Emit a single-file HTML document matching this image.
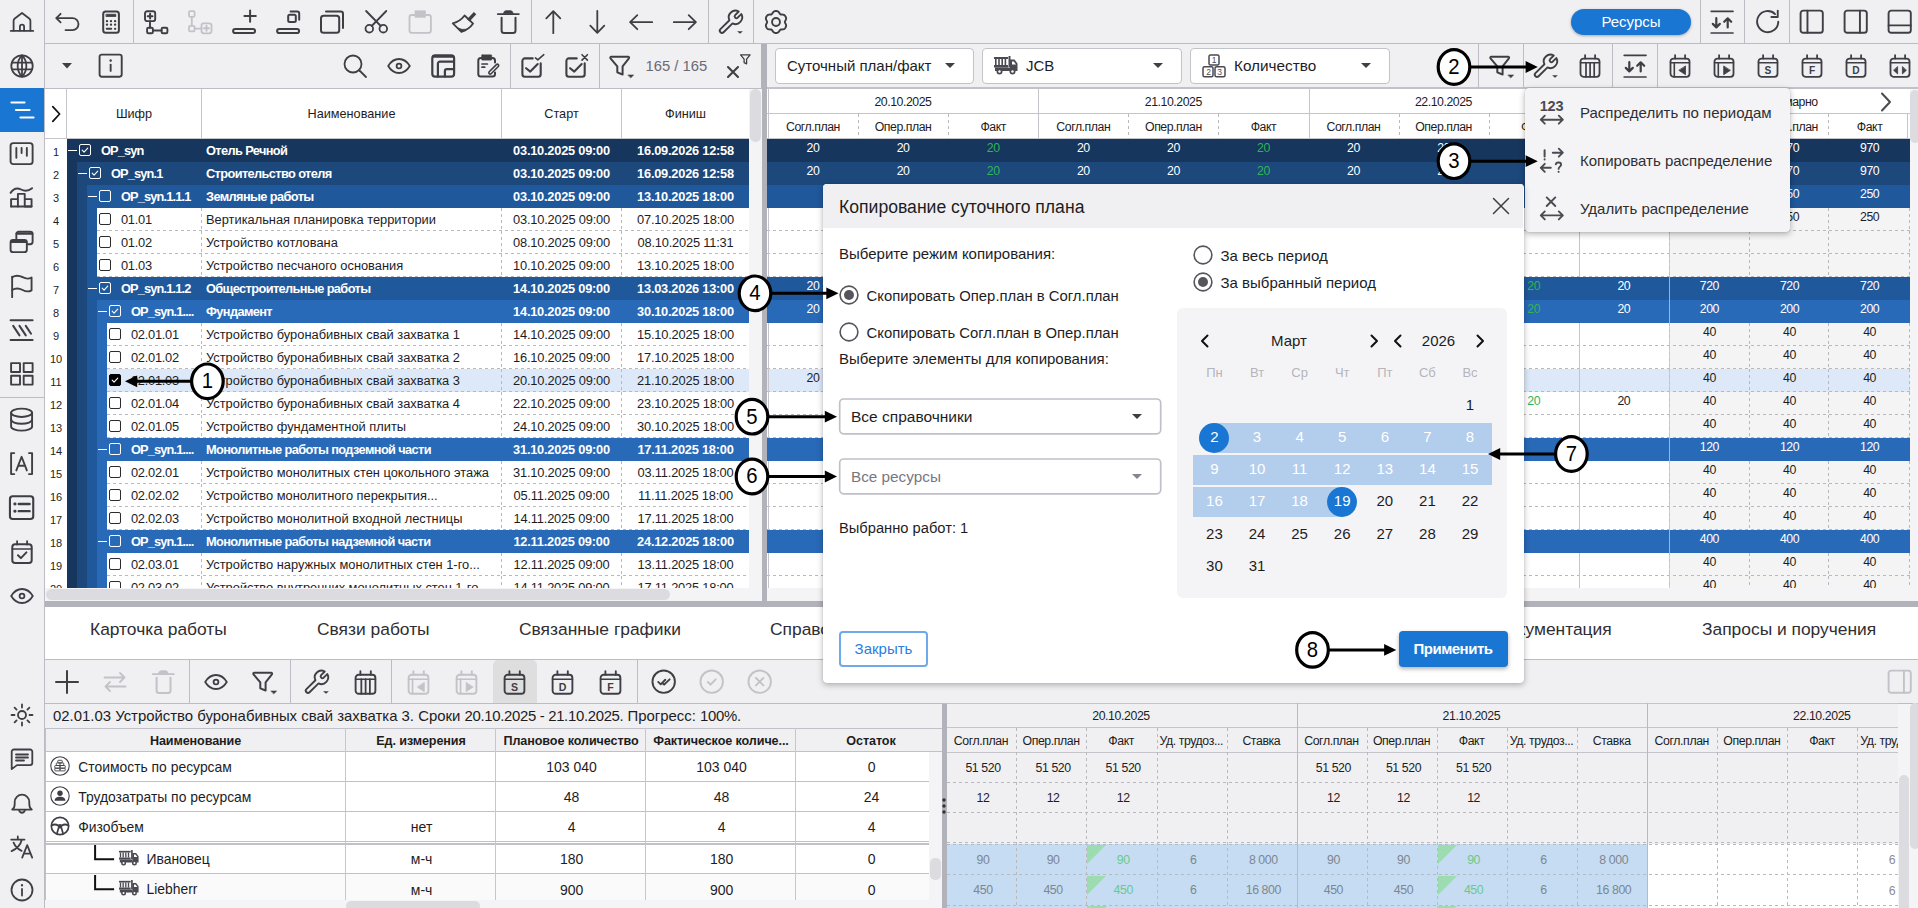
<!DOCTYPE html><html><head><meta charset="utf-8"><title>UI</title><style>
*{box-sizing:border-box;margin:0;padding:0}
html,body{width:1918px;height:908px;overflow:hidden}
body{position:relative;background:#f0f0f2;font-family:"Liberation Sans",sans-serif;color:#1d1d1f;font-size:13px}
.abs,.a{position:absolute}
.ic{position:absolute;fill:none;stroke:#3e3e45;color:#3e3e45;stroke-width:1.8;stroke-linecap:round;stroke-linejoin:round;overflow:visible}
.ic.dis{stroke:#c2c2c8;color:#c2c2c8}
.vs{position:absolute;width:1px;background:#bcbcc4}
.hl{position:absolute;height:1px;background:#bcbcc4}
.nw{white-space:nowrap}
/* left table */
.lt{position:absolute;left:45px;top:89px;width:704px;height:499px;overflow:hidden;background:#fff}
.lr{position:absolute;left:0;width:704px;height:23px;line-height:23px;font-size:12.85px;white-space:nowrap}
.lr .num{position:absolute;left:0;width:22px;text-align:center;font-size:11px;color:#1d1d1f;top:2.3px}
.lr .bg{position:absolute;top:0;height:23px;right:0}
.lr .st{position:absolute;top:0;height:23px;width:10px}
.lr .t{position:absolute;top:0;height:23px;overflow:hidden}
.lr.g .t{color:#fff;font-weight:bold;letter-spacing:-0.62px;font-size:12.8px}
.lr.g .t.k{letter-spacing:-0.85px}
.lr.g .t.d{letter-spacing:-0.22px;font-size:12.8px}
.lr .c{text-align:center}
.lr .t.d{letter-spacing:-0.2px}
.lr:not(.g) .t.k{letter-spacing:-0.28px}
.cb{position:absolute;width:12px;height:12px;border:1.5px solid #2b2b30;border-radius:2px;background:#fff;top:4.8px}
.lr.g .cb{background:transparent;border-color:#fff;border-width:1.3px}
.mn{position:absolute;top:10.5px;width:9px;height:1.6px;background:#fff}
.db{position:absolute;left:0;right:0;bottom:0;height:1px;background-image:linear-gradient(90deg,#b9b9bd 0 3px,transparent 3px 6px);background-size:6px 1px}
.dv{position:absolute;top:0;bottom:0;width:1px;background-image:linear-gradient(180deg,#b9b9bd 0 3px,transparent 3px 6px);background-size:1px 6px}
/* right grid */
.rg{position:absolute;left:767px;top:89px;width:1143px;height:499px;overflow:hidden;background:#fff;font-size:12px;letter-spacing:-0.45px}
.rr{position:absolute;left:0;width:1143px;height:23px;line-height:18px;white-space:nowrap;font-size:12.3px}
.rr .v{position:absolute;top:0;text-align:center;color:#1d1d1f}
.rr.g .v{color:#fff}
.rr .v.gr{color:#2fb457}
/* modal */
.modal{position:absolute;left:822.9px;top:184.2px;width:701px;height:498.7px;background:#fff;border-radius:4px;box-shadow:0 2px 6px rgba(0,0,0,.28),0 0 1px rgba(0,0,0,.25);overflow:hidden}
.modal>.in{position:absolute;left:-0.9px;top:-0.2px;width:701px;height:499px}
.radio{position:absolute;width:20px;height:20px;border-radius:50%;border:2px solid #55555d;background:#fff;box-shadow:0 0 1px rgba(0,0,0,.25)}
.radio.on::after{content:"";position:absolute;left:2.9px;top:2.9px;width:10px;height:10px;border-radius:50%;background:#55555d}

.sel{position:absolute;border:1.5px solid #b4b4bc;box-shadow:0 0 1px rgba(0,0,0,.15);border-radius:4px;background:#fff}
.dd{position:absolute;top:48px;height:36px;border:1px solid #c3c3ca;border-radius:4px;background:#fff}
.tri{position:absolute;width:0;height:0;border-left:5px solid transparent;border-right:5px solid transparent;border-top:5.5px solid #3e3e45}
.cal td{}
/* bottom */
.bt{position:absolute;font-size:14px}
.ann circle,.ann ellipse{fill:#fff;stroke:#000;stroke-width:3.2}
.ann text{font-family:"Liberation Sans",sans-serif;font-size:21.6px;fill:#000;text-anchor:middle}
.ann line{stroke:#000;stroke-width:3}
.ann polygon{fill:#000}
</style></head><body><div class="a" style="left:0;top:0;width:44px;height:908px;background:#f0f0f2"></div><div class="vs" style="left:44px;top:0;height:908px"></div><div class="a" style="left:0;top:88px;width:44px;height:44px;background:#1976d2"></div><svg class="ic " style="left:10.0px;top:10.0px;width:24px;height:24px;" viewBox="0 0 24 24"><path d="M0.8 20.900h22.400"/><path d="M3.600 20.700V10.800c0-1 .4-1.700 1.200-2.300L12 3l7.200 5.500c.8.600 1.200 1.300 1.200 2.300v9.900"/><path d="M9.900 20.700v-3.900a2.100 2.100 0 0 1 4.200 0v3.900"/></svg><svg class="ic " style="left:10.0px;top:54.0px;width:24px;height:24px;" viewBox="0 0 24 24"><circle cx="12" cy="12" r="10.700"/><path d="M2.300 8.700h19.400M2.300 15.300h19.400M12 1.300v21.400"/><path d="M12 1.400c-5.800 5.800-5.800 15.400 0 21.200M12 1.400c5.800 5.800 5.800 15.400 0 21.200"/></svg><svg class="ic " style="left:10.0px;top:98.0px;width:24px;height:24px;stroke:#fff;color:#fff;" viewBox="0 0 24 24"><path d="M1.5 4.5h13M6 12h13.5M10.5 19.5h13" stroke-width="2.2"/></svg><svg class="ic " style="left:9.4px;top:141.4px;width:25.2px;height:25.2px;" viewBox="0 0 24 24"><rect x="1.5" y="2" width="21" height="20" rx="2.5"/><path d="M7 6.5v9.5M12 6.5v5M17 6.5v7.5"/></svg><svg class="ic " style="left:9.4px;top:185.4px;width:25.2px;height:25.2px;" viewBox="0 0 24 24"><path d="M2 20.5V13.5h6.5v7M8.5 20.5V8.5h6.5v12M15 20.5v-7h6.5v7z"/><path d="M2 20.5h19.5"/><path d="M1.5 7.5c3-4.5 6.5-5 10-3.2 3.5 1.8 7 1.5 10.5-1.3"/></svg><svg class="ic " style="left:9.4px;top:229.4px;width:25.2px;height:25.2px;" viewBox="0 0 24 24"><rect x="7" y="2.5" width="15.5" height="12" rx="2.3"/><path d="M7.5 4.2h14.5" stroke-width="2.4"/><rect x="1.5" y="10.5" width="15.5" height="11.5" rx="2.3" fill="#f0f0f2"/><path d="M2 12.2h14.5" stroke-width="2.2"/></svg><svg class="ic " style="left:9.4px;top:273.4px;width:25.2px;height:25.2px;" viewBox="0 0 24 24"><path d="M3 23V3.5"/><path d="M3 4c3.5-2.2 7-1.6 10 0s6 1.7 8.5 .3v12.2c-2.5 1.4-5.5 1.3-8.5-.3s-6.5-2.2-10 0"/></svg><svg class="ic " style="left:9.4px;top:317.4px;width:25.2px;height:25.2px;" viewBox="0 0 24 24"><path d="M1.5 3h21M1.5 22h21" stroke-width="1.9"/><path d="M4 8.5l6 9M10 8.5l6 9M16 8.5l5 7.5" stroke-width="1.9"/></svg><svg class="ic " style="left:9.4px;top:361.4px;width:25.2px;height:25.2px;" viewBox="0 0 24 24"><rect x="2" y="2" width="8.5" height="8.5"/><rect x="14" y="2" width="8.5" height="8.5"/><rect x="2" y="14" width="8.5" height="8.5"/><rect x="14" y="14" width="8.5" height="8.5"/></svg><svg class="ic " style="left:9.4px;top:407.4px;width:25.2px;height:25.2px;" viewBox="0 0 24 24"><ellipse cx="12" cy="5.5" rx="10" ry="4"/><path d="M2 5.5v13c0 2.2 4.5 4 10 4s10-1.8 10-4v-13"/><path d="M2 12c0 2.2 4.5 4 10 4s10-1.8 10-4"/></svg><svg class="ic " style="left:9.4px;top:451.4px;width:25.2px;height:25.2px;" viewBox="0 0 24 24"><path d="M5 2H2v20h3M19 2h3v20h-3"/><path d="M7 18.5L12 5.5l5 13M8.8 14h6.4"/></svg><svg class="ic " style="left:9.4px;top:495.4px;width:25.2px;height:25.2px;" viewBox="0 0 24 24"><rect x="0.900" y="1.200" width="22.200" height="21.600" rx="2.600" stroke-width="2"/><path d="M9.300 8.600h10.300M9.300 15.400h10.300" stroke-width="2.300"/><path d="M5.500 8.600h.3M5.500 15.400h.3" stroke-width="2.800"/></svg><svg class="ic " style="left:10.0px;top:540.0px;width:24px;height:24px;" viewBox="0 0 24 24"><rect x="2.300" y="4.300" width="19.400" height="18.700" rx="2.800" stroke-width="2"/><path d="M2.500 9h19" stroke-width="1.700"/><path d="M7.100 1.200v3.400M17.100 1.200v3.400"/><path d="M8 15.200l2.900 2.900 5.500-5.700" stroke-width="2"/></svg><svg class="ic " style="left:10.0px;top:584.0px;width:24px;height:24px;" viewBox="0 0 24 24"><path d="M1.2 12C4 7.3 7.7 5 12 5s8 2.3 10.8 7C20 16.7 16.3 19 12 19S4 16.7 1.2 12z"/><circle cx="12" cy="12" r="2.4"/></svg><svg class="ic " style="left:10.0px;top:703.0px;width:24px;height:24px;" viewBox="0 0 24 24"><circle cx="12" cy="12" r="4"/><path d="M12 1.5v3M12 19.5v3M1.5 12h3M19.5 12h3M4.6 4.6l2 2M17.4 17.4l2 2M4.6 19.4l2-2M17.4 6.6l2-2"/></svg><svg class="ic " style="left:10.0px;top:747.0px;width:24px;height:24px;" viewBox="0 0 24 24"><path d="M4 2.5h16a2.3 2.3 0 0 1 2.3 2.3v11a2.3 2.3 0 0 1-2.3 2.3H7l-5.3 4V4.8A2.3 2.3 0 0 1 4 2.5z"/><path d="M6 7.5h12M6 10.5h12M6 13.5h8"/></svg><svg class="ic " style="left:10.0px;top:791.0px;width:24px;height:24px;" viewBox="0 0 24 24"><path d="M2.200 18.600c1.800-1.100 2.500-2.900 2.500-5.600V11a7.300 7.300 0 0 1 14.600 0v2c0 2.700.7 4.500 2.500 5.600z"/><path d="M9.200 19.600a2.900 2.900 0 0 0 5.600 0"/></svg><svg class="ic " style="left:10.0px;top:835.0px;width:24px;height:24px;" viewBox="0 0 24 24"><path d="M1.200 4.600h13.300M7.800 1.500v3M3.600 7.600c1.400 3.400 4.300 6.500 8 8.300M11.800 4.800c-1.200 4.700-4.700 9-10.200 11.300"/><path d="M12.200 22.600l5-12.400 5 12.400M13.900 18.600h6.600" /></svg><svg class="ic " style="left:10.0px;top:878.0px;width:24px;height:24px;" viewBox="0 0 24 24"><circle cx="12" cy="12" r="10.500"/><path d="M12 11v6.500"/><path d="M12 7v.4" stroke-width="2.200"/></svg><div class="hl" style="left:0;top:397px;width:44px"></div><div class="hl" style="left:45px;top:43px;width:1873px"></div><svg class="ic " style="left:55.0px;top:10.0px;width:24px;height:24px;" viewBox="0 0 24 24"><path d="M5.600 3.800L1.300 8.100l4.300 4.300"/><path d="M1.600 8.100h15.900a6 6 0 0 1 0 12h-7"/></svg><svg class="ic " style="left:99.0px;top:10.0px;width:24px;height:24px;" viewBox="0 0 24 24"><rect x="4.200" y="1.500" width="15.700" height="21.200" rx="2.500" stroke-width="2"/><path d="M7.300 4.300h9.500v2.200H7.300z" fill="currentColor" stroke-width=".8"/><path d="M7.900 11.200h.2M11.900 11.200h.2M16 11.200h.2M7.900 14.700h.2M11.900 14.700h.2M16 14.700h.2M16 18.800h.2" stroke-width="2.200"/><path d="M7.800 18.800h4.400" stroke-width="2.100"/></svg><svg class="ic " style="left:144.0px;top:10.0px;width:24px;height:24px;" viewBox="0 0 24 24"><rect x="1" y="1.300" width="10.200" height="9.800" rx="2.200" stroke-width="1.900"/><path d="M3.700 6.200h4.800M6.100 3.800v4.800" stroke-width="2"/><path d="M6 11.200v6.500M8.900 20.500h8.700" stroke-width="1.900"/><rect x="3.100" y="17.800" width="5.800" height="5.400" rx="1.300" stroke-width="1.900"/><rect x="17.600" y="17.800" width="5.800" height="5.400" rx="1.300" stroke-width="1.900"/></svg><svg class="ic dis" style="left:188.0px;top:10.0px;width:24px;height:24px;" viewBox="0 0 24 24"><rect x="1" y="1.200" width="5.600" height="5.600" rx="1.200"/><path d="M3.800 6.800v9M6.600 18.600h6.800"/><rect x="1" y="15.800" width="5.600" height="5.600" rx="1.200"/><rect x="13.500" y="13.300" width="10" height="10" rx="2.200"/><path d="M16 18.300h5M18.500 15.800v5" stroke-width="1.900"/></svg><svg class="ic " style="left:232.0px;top:10.0px;width:24px;height:24px;" viewBox="0 0 24 24"><rect x="1.100" y="18.900" width="22" height="4.200" rx="2.100" stroke-width="2"/><path d="M12.400 6.100h11.400M18.100 .400v11.400" stroke-width="2"/></svg><svg class="ic " style="left:276.0px;top:10.0px;width:24px;height:24px;" viewBox="0 0 24 24"><rect x="1.100" y="18.900" width="22" height="4.200" rx="2.100" stroke-width="2"/><rect x="12.200" y="4.700" width="7.600" height="7.200" rx="1.500" stroke-width="2"/><path d="M14.600 1.400h6.600a2 2 0 0 1 2 2V9.800" stroke-width="2"/></svg><svg class="ic " style="left:320.0px;top:10.0px;width:24px;height:24px;" viewBox="0 0 24 24"><rect x="1" y="5.800" width="18.200" height="17" rx="2.600" stroke-width="2"/><path d="M6 1.600h14.700a2.300 2.300 0 0 1 2.300 2.300V18" stroke-width="2"/></svg><svg class="ic " style="left:364.0px;top:10.0px;width:24px;height:24px;" viewBox="0 0 24 24"><circle cx="5.300" cy="18.700" r="3.800"/><circle cx="19.300" cy="18.700" r="3.800"/><path d="M2.100 1l14.700 15M22.300 1L7.700 16"/></svg><svg class="ic dis" style="left:408.0px;top:10.0px;width:24px;height:24px;" viewBox="0 0 24 24"><path d="M6.200 5H3.800a2.300 2.300 0 0 0-2.300 2.300v13.300a2.300 2.300 0 0 0 2.300 2.300h16.800a2.300 2.300 0 0 0 2.300-2.300V7.300a2.300 2.300 0 0 0-2.300-2.300h-2.300"/><rect x="6.700" y=".4" width="11.100" height="7.300" fill="currentColor" stroke="none"/></svg><svg class="ic " style="left:452.0px;top:10.0px;width:24px;height:24px;" viewBox="0 0 24 24"><path d="M21.900 4.300l-4.500 4.900" stroke-width="3.400" stroke-linecap="square"/><path d="M12.600 5.500L21.100 13.600Q17.200 19.400 9.400 21.900L.8 13.400Q8.200 11.400 12.600 5.500z" stroke-width="1.800"/><path d="M5.300 17.800L9.400 21.900Q12.800 20.900 14.800 19.300Q10 20.300 5.300 17.800z" fill="currentColor" stroke-width=".8"/></svg><svg class="ic " style="left:496.0px;top:10.0px;width:24px;height:24px;" viewBox="0 0 24 24"><path d="M1.800 4.100h21" stroke-width="1.900"/><path d="M7.300 3.700c.4-2.100 1.400-3.100 3.200-3.100h3.600c1.800 0 2.800 1 3.200 3.100z" fill="currentColor" stroke-width=".5"/><path d="M5.600 7.700V20.400a2.500 2.500 0 0 0 2.500 2.500h8.900a2.500 2.500 0 0 0 2.500-2.500V7.700" stroke-width="2"/></svg><svg class="ic " style="left:541.0px;top:10.0px;width:24px;height:24px;" viewBox="0 0 24 24"><path d="M12.300 23.200V1.500M5.300 8.300l7-7.200 7 7.200"/></svg><svg class="ic " style="left:585.0px;top:10.0px;width:24px;height:24px;" viewBox="0 0 24 24"><path d="M12.300 .8v21.700M5.300 15.700l7 7.200 7-7.200"/></svg><svg class="ic " style="left:629.0px;top:10.0px;width:24px;height:24px;" viewBox="0 0 24 24"><path d="M23.200 12.200H1.500M8.300 5.200l-7.200 7 7.200 7"/></svg><svg class="ic " style="left:673.0px;top:10.0px;width:24px;height:24px;" viewBox="0 0 24 24"><path d="M.8 12.200h21.700M15.700 5.200l7.200 7-7.200 7"/></svg><svg class="ic " style="left:719.0px;top:10.0px;width:24px;height:24px;" viewBox="0 0 24 24"><path d="M19.75 1.51A6.7 6.7 0 0 0 10.43 10.27L1.44 19.11A2.2 2.2 0 0 0 4.56 22.23L13.54 13.38A6.7 6.7 0 0 0 22.30 4.06L18.65 7.70A1.8 1.8 0 0 1 16.11 5.16Z" stroke-width="1.9"/><path d="M18.100 21.200h5.800l-2.900 2.600z" fill="currentColor" stroke="none"/></svg><svg class="ic " style="left:764.0px;top:10.0px;width:24px;height:24px;" viewBox="0 0 24 24"><path d="M12.00 1.00L12.57 1.03L13.14 1.13L13.69 1.31L14.21 1.61L14.67 2.03L15.08 2.53L15.42 3.08L15.74 3.60L16.06 4.03L16.43 4.34L16.87 4.50L17.40 4.56L18.01 4.57L18.66 4.60L19.30 4.70L19.89 4.89L20.41 5.19L20.84 5.57L21.21 6.02L21.53 6.50L21.79 7.01L21.99 7.55L22.10 8.12L22.10 8.72L21.97 9.33L21.74 9.93L21.44 10.51L21.14 11.04L20.93 11.53L20.85 12.00L20.93 12.47L21.14 12.96L21.44 13.49L21.74 14.07L21.97 14.67L22.10 15.28L22.10 15.88L21.99 16.45L21.79 16.99L21.53 17.50L21.21 17.98L20.84 18.43L20.41 18.81L19.89 19.11L19.30 19.30L18.66 19.40L18.01 19.43L17.40 19.44L16.87 19.50L16.43 19.66L16.06 19.97L15.74 20.40L15.42 20.92L15.08 21.47L14.67 21.97L14.21 22.39L13.69 22.69L13.14 22.87L12.57 22.97L12.00 23.00L11.43 22.97L10.86 22.87L10.31 22.69L9.79 22.39L9.33 21.97L8.92 21.47L8.58 20.92L8.26 20.40L7.94 19.97L7.58 19.66L7.13 19.50L6.60 19.44L5.99 19.43L5.34 19.40L4.70 19.30L4.11 19.11L3.59 18.81L3.16 18.43L2.79 17.98L2.47 17.50L2.21 16.99L2.01 16.45L1.90 15.88L1.90 15.28L2.03 14.67L2.26 14.07L2.56 13.49L2.86 12.96L3.07 12.47L3.15 12.00L3.07 11.53L2.86 11.04L2.56 10.51L2.26 9.93L2.03 9.33L1.90 8.72L1.90 8.12L2.01 7.55L2.21 7.01L2.47 6.50L2.79 6.02L3.16 5.57L3.59 5.19L4.11 4.89L4.70 4.70L5.34 4.60L5.99 4.57L6.60 4.56L7.13 4.50L7.58 4.34L7.94 4.03L8.26 3.60L8.58 3.08L8.92 2.53L9.33 2.03L9.79 1.61L10.31 1.31L10.86 1.13L11.43 1.03Z" stroke-width="1.9"/><circle cx="12" cy="12" r="3.950" stroke-width="1.9"/></svg><svg class="ic " style="left:1710.0px;top:10.0px;width:24px;height:24px;" viewBox="0 0 24 24"><path d="M1.200 1.300h21.800M1.200 23h21.800" stroke-width="1.700"/><path d="M6.300 8.200v9M2.800 13.900l3.500 3.500 3.500-3.500" stroke-width="2.200"/><path d="M17.700 17.400v-9M14.200 11.800l3.500-3.500 3.500 3.500" stroke-width="2.200"/></svg><svg class="ic " style="left:1755.0px;top:9.3px;width:25.4px;height:25.4px;" viewBox="0 0 24 24"><path d="M22 12a10 10 0 1 1-3-7.200"/><path d="M21.500 1.500v6h-6"/></svg><svg class="ic " style="left:1799.0px;top:9.3px;width:25.4px;height:25.4px;" viewBox="0 0 24 24"><rect x="1.500" y="1.500" width="21" height="21" rx="2.500"/><path d="M8 1.500v21"/></svg><svg class="ic " style="left:1843.0px;top:9.3px;width:25.4px;height:25.4px;" viewBox="0 0 24 24"><rect x="1.500" y="1.500" width="21" height="21" rx="2.500"/><path d="M16 1.500v21"/></svg><svg class="ic " style="left:1887.0px;top:9.3px;width:25.4px;height:25.4px;" viewBox="0 0 24 24"><rect x="1.500" y="1.500" width="21" height="21" rx="2.500"/><path d="M1.500 15.500h21"/></svg><div class="vs" style="left:133px;top:0;height:43px"></div><div class="vs" style="left:531px;top:0;height:43px"></div><div class="vs" style="left:708px;top:0;height:43px"></div><div class="vs" style="left:753px;top:0;height:43px"></div><div class="vs" style="left:1699.5px;top:0;height:43px"></div><div class="vs" style="left:1744.3px;top:0;height:43px"></div><div class="vs" style="left:1789px;top:0;height:43px"></div><div class="a nw" style="left:1571px;top:9px;width:120px;height:26px;border-radius:13px;background:#1976d2;color:#fff;font-size:15px;line-height:26px;text-align:center;box-shadow:0 1px 3px rgba(0,0,0,.3)">Ресурсы</div><div class="hl" style="left:45px;top:88px;width:717px"></div><div class="hl" style="left:767px;top:87px;width:1151px;height:2px;background:#c2c2ca"></div><svg class="ic " style="left:55.0px;top:53.0px;width:24px;height:24px;" viewBox="0 0 24 24"><path d="M7 10h10l-5 5.500z" fill="#3e3e45" stroke="none"/></svg><svg class="ic " style="left:98.3px;top:53.4px;width:25.3px;height:25.3px;" viewBox="0 0 24 24"><rect x="1.500" y="1.500" width="21" height="21" rx="2"/><path d="M12 11v6"/><path d="M12 7v.400" stroke-width="2.200"/></svg><svg class="ic " style="left:343.0px;top:54.0px;width:24px;height:24px;" viewBox="0 0 24 24"><circle cx="10" cy="10" r="8.500"/><path d="M16.500 16.500l6.500 6.500"/></svg><svg class="ic " style="left:387.0px;top:54.0px;width:24px;height:24px;" viewBox="0 0 24 24"><path d="M1.2 12C4 7.3 7.7 5 12 5s8 2.3 10.8 7C20 16.7 16.3 19 12 19S4 16.7 1.2 12z"/><circle cx="12" cy="12" r="2.4"/></svg><svg class="ic " style="left:431.0px;top:54.0px;width:24px;height:24px;" viewBox="0 0 24 24"><rect x="1.300" y="1.300" width="21.800" height="21.400" rx="3" stroke-width="2.200"/><path d="M2.600 2.500h19.200" stroke-width="2.600"/><path d="M6.900 22.500V9.600a2 2 0 0 1 2-2H22.800" stroke-width="2.200"/><path d="M13.900 22.500V17.100a2 2 0 0 1 2-2h6.900" stroke-width="2.200"/></svg><svg class="ic " style="left:475.0px;top:54.0px;width:24px;height:24px;" viewBox="0 0 24 24"><path d="M6.500 3.900H5.800a2.500 2.500 0 0 0-2.500 2.500v13.700a2.500 2.500 0 0 0 2.500 2.500h11.700a2.500 2.500 0 0 0 2.500-2.500v-1.600M17 3.900h.5a2.500 2.500 0 0 1 2.500 2.500v2.100" stroke-width="2"/><path d="M7.300 .700h8.700a.8.800 0 0 1 .8.800v3.900a.8.800 0 0 1-.8.800H7.300a.8.800 0 0 1-.8-.8V1.500a.8.800 0 0 1 .8-.8z" fill="currentColor" stroke-width=".4"/><path d="M7 10h5.400M7 13.200h2.700" stroke-width="1.700"/><path d="M14.200 17.800l7.200-7.200a1.300 1.300 0 0 1 1.900 1.900l-7.200 7.200a1.300 1.300 0 0 1-1.900-1.900z" stroke-width="1.600"/></svg><svg class="ic " style="left:520.0px;top:54.0px;width:24px;height:24px;" viewBox="0 0 24 24"><path d="M20.700 9.200v11.100a2.500 2.500 0 0 1-2.500 2.500H4.900a2.500 2.500 0 0 1-2.500-2.500V6.900a2.500 2.500 0 0 1 2.500-2.500h7.800" stroke-width="2.100"/><path d="M6.100 14.200l4.200 3.400 7.400-7.500" stroke-width="2.100"/><path d="M15.500 3.900l2.300 1.900 6-5.100" stroke-width="1.600"/></svg><svg class="ic " style="left:564.0px;top:54.0px;width:24px;height:24px;" viewBox="0 0 24 24"><path d="M20.700 9.200v11.100a2.500 2.500 0 0 1-2.500 2.500H4.900a2.500 2.500 0 0 1-2.500-2.500V6.900a2.500 2.500 0 0 1 2.500-2.500h7.800" stroke-width="2.100"/><path d="M6.100 14.200l4.200 3.400 7.400-7.500" stroke-width="2.100"/><path d="M18 .700l5.400 5.400M23.400 .700l-5.400 5.400" stroke-width="1.600"/></svg><svg class="ic " style="left:609.2px;top:54.0px;width:24px;height:24px;" viewBox="0 0 24 24"><path d="M2.300 2.700h16.800a1 1 0 0 1 .8 1.600l-6.300 8v8.200l-5.300-2.200v-6l-6.800-8a1 1 0 0 1 .8-1.600z" stroke-width="2"/><path d="M19.200 21h5.400l-2.700 2.700z" fill="currentColor" stroke-width=".6"/></svg><svg class="ic " style="left:725.0px;top:54.0px;width:24px;height:24px;" viewBox="0 0 24 24"><path d="M3 13l10 10M13 13L3 23" stroke-width="2.100"/><path d="M15.600 .800h9.500l-3.500 4.300v4.700l-2.500-1.200v-3.500z" stroke-width="1.300"/></svg><svg class="ic " style="left:1488.8px;top:54.0px;width:24px;height:24px;" viewBox="0 0 24 24"><path d="M2.300 2.700h16.800a1 1 0 0 1 .8 1.600l-6.300 8v8.200l-5.300-2.200v-6l-6.800-8a1 1 0 0 1 .8-1.600z" stroke-width="2"/><path d="M19.200 21h5.400l-2.700 2.700z" fill="currentColor" stroke-width=".6"/></svg><svg class="ic " style="left:1533.8px;top:54.0px;width:24px;height:24px;" viewBox="0 0 24 24"><path d="M19.75 1.51A6.7 6.7 0 0 0 10.43 10.27L1.44 19.11A2.2 2.2 0 0 0 4.56 22.23L13.54 13.38A6.7 6.7 0 0 0 22.30 4.06L18.65 7.70A1.8 1.8 0 0 1 16.11 5.16Z" stroke-width="1.9"/><path d="M18.100 21.200h5.800l-2.900 2.600z" fill="currentColor" stroke="none"/></svg><svg class="ic " style="left:1577.8px;top:54.0px;width:24px;height:24px;" viewBox="0 0 24 24"><rect x="2.500" y="4.600" width="19" height="18.200" rx="3"/><path d="M2.500 8.800h19" stroke-width="1.500"/><path d="M7.100 1.200v3.400M17.100 1.200v3.400"/><path d="M8 8.800v14M12.100 8.800v14M16.200 8.800v14" stroke-width="1.700"/></svg><svg class="ic " style="left:1622.8px;top:54.0px;width:24px;height:24px;" viewBox="0 0 24 24"><path d="M1.200 1.300h21.800M1.200 23h21.800" stroke-width="1.700"/><path d="M6.300 8.200v9M2.800 13.900l3.500 3.500 3.500-3.500" stroke-width="2.200"/><path d="M17.700 17.400v-9M14.200 11.800l3.500-3.500 3.500 3.500" stroke-width="2.200"/></svg><svg class="ic " style="left:1667.8px;top:54.0px;width:24px;height:24px;" viewBox="0 0 24 24"><rect x="2.500" y="4.600" width="19" height="18.200" rx="3"/><path d="M2.500 8.800h19" stroke-width="1.500"/><path d="M7.100 1.200v3.400M17.100 1.200v3.400"/><path d="M6.300 8.800v14" stroke-width="1.600"/><path d="M17.500 12.300v8.400l-6.400-4.200z" fill="currentColor" stroke-width=".8"/></svg><svg class="ic " style="left:1711.8px;top:54.0px;width:24px;height:24px;" viewBox="0 0 24 24"><rect x="2.500" y="4.600" width="19" height="18.200" rx="3"/><path d="M2.500 8.800h19" stroke-width="1.500"/><path d="M7.100 1.200v3.400M17.100 1.200v3.400"/><path d="M6.300 8.800v14" stroke-width="1.600"/><path d="M11.700 12.300v8.400l6.400-4.200z" fill="currentColor" stroke-width=".8"/></svg><svg class="ic " style="left:1755.8px;top:54.0px;width:24px;height:24px;" viewBox="0 0 24 24"><rect x="2.500" y="4.600" width="19" height="18.200" rx="3"/><path d="M2.500 8.800h19" stroke-width="1.500"/><path d="M7.100 1.200v3.400M17.100 1.200v3.400"/><text x="12" y="20.100" text-anchor="middle" font-family="Liberation Sans" font-weight="bold" font-size="10.200" fill="currentColor" stroke="none">S</text></svg><svg class="ic " style="left:1799.8px;top:54.0px;width:24px;height:24px;" viewBox="0 0 24 24"><rect x="2.500" y="4.600" width="19" height="18.200" rx="3"/><path d="M2.500 8.800h19" stroke-width="1.500"/><path d="M7.100 1.200v3.400M17.100 1.200v3.400"/><text x="12" y="20.100" text-anchor="middle" font-family="Liberation Sans" font-weight="bold" font-size="10.200" fill="currentColor" stroke="none">F</text></svg><svg class="ic " style="left:1843.8px;top:54.0px;width:24px;height:24px;" viewBox="0 0 24 24"><rect x="2.500" y="4.600" width="19" height="18.200" rx="3"/><path d="M2.500 8.800h19" stroke-width="1.500"/><path d="M7.100 1.200v3.400M17.100 1.200v3.400"/><text x="12" y="20.100" text-anchor="middle" font-family="Liberation Sans" font-weight="bold" font-size="10.200" fill="currentColor" stroke="none">D</text></svg><svg class="ic " style="left:1887.8px;top:54.0px;width:24px;height:24px;" viewBox="0 0 24 24"><rect x="2.500" y="4.600" width="19" height="18.200" rx="3"/><path d="M2.500 8.800h19" stroke-width="1.500"/><path d="M7.100 1.200v3.400M17.100 1.200v3.400"/><path d="M9.600 12.900v7l-3.800-3.500zM14.400 12.900v7l3.800-3.500z" fill="currentColor" stroke-width=".8"/></svg><div class="vs" style="left:510px;top:44px;height:44px"></div><div class="vs" style="left:599px;top:44px;height:44px"></div><div class="vs" style="left:1478px;top:44px;height:44px"></div><div class="vs" style="left:1523px;top:44px;height:44px"></div><div class="vs" style="left:1612px;top:44px;height:44px"></div><div class="vs" style="left:1657px;top:44px;height:44px"></div><div class="a nw" style="left:645.5px;top:57.6px;font-size:14.8px;color:#6a6a72">165 / 165</div><div class="a" style="left:761px;top:44px;width:6px;height:557px;background:#b2b2ba"></div><div class="dd" style="left:775px;width:199px"><div class="a nw" style="left:11px;top:0;line-height:34px;font-size:15px;color:#1d1d1f">Суточный план/факт</div><div class="tri" style="right:18px;top:14px"></div></div><div class="dd" style="left:982px;width:200px"><svg class="a" style="left:11px;top:7px;width:24px;height:20px" viewBox="0 0 24 20"><g fill="#4a4a52"><path d="M0 1h14v2H0z"/><path d="M1 3h1.600v6H1zM4.200 3h1.600v6H4.200zM7.400 3h1.600v6H7.400zM10.600 3h1.600v6h-1.600z"/><path d="M0 9h14v2.500H0z"/><path d="M14.500 0h2v11h-2z"/><path d="M16 3.500h4.500l3 4V15H16zM18 5.500v3h4l-2.200-3z" fill-rule="evenodd"/><path d="M1 11.500h15V15H1z"/><circle cx="5.500" cy="15.500" r="3"/><circle cx="18.500" cy="15.500" r="3"/></g><circle cx="5.500" cy="15.500" r="1.200" fill="#fff"/><circle cx="18.500" cy="15.500" r="1.200" fill="#fff"/></svg><div class="a nw" style="left:43px;top:0;line-height:34px;font-size:15px;color:#1d1d1f">JCB</div><div class="tri" style="right:18px;top:14px"></div></div><div class="dd" style="left:1190px;width:200px"><svg class="a" style="left:11px;top:5px;width:24px;height:24px" viewBox="0 0 24 24" fill="none" stroke="#4a4a52" stroke-width="1.500"><rect x="7" y="1" width="10" height="10" rx="1.500"/><rect x="1" y="12.800" width="10" height="10" rx="1.500"/><rect x="13" y="12.800" width="10" height="10" rx="1.500"/><g font-family="Liberation Sans" font-size="8.500" fill="#4a4a52" stroke="none" text-anchor="middle"><text x="12" y="9">1</text><text x="6.500" y="20.500">2</text><text x="17.500" y="20.500">3</text></g></svg><div class="a nw" style="left:43px;top:0;line-height:34px;font-size:15px;color:#1d1d1f"><span style="font-size:15.3px">Количество</span></div><div class="tri" style="right:18px;top:14px"></div></div><div class="lt"><div class="a" style="left:0;top:0;width:704px;height:50px;background:#fff"></div><div class="vs" style="left:21px;top:0;height:50px;background:#c4c4ca"></div><div class="vs" style="left:156px;top:0;height:50px;background:#c4c4ca"></div><div class="vs" style="left:456px;top:0;height:50px;background:#c4c4ca"></div><div class="vs" style="left:576px;top:0;height:50px;background:#c4c4ca"></div><div class="hl" style="left:0;top:49px;width:704px;background:#c4c4ca"></div><div class="a nw" style="left:22px;top:0;width:134px;height:50px;line-height:50px;text-align:center;font-size:12.7px">Шифр</div><div class="a nw" style="left:157px;top:0;width:299px;height:50px;line-height:50px;text-align:center;font-size:12.7px">Наименование</div><div class="a nw" style="left:457px;top:0;width:119px;height:50px;line-height:50px;text-align:center;font-size:12.7px">Старт</div><div class="a nw" style="left:577px;top:0;width:127px;height:50px;line-height:50px;text-align:center;font-size:12.7px">Финиш</div><svg class="a" style="left:4px;top:13px;width:14px;height:24px" viewBox="0 0 14 24"><path d="M3.800 4.600l6.800 7.400-6.800 7.400" fill="none" stroke="#111" stroke-width="1.700" stroke-linecap="round" stroke-linejoin="round"/></svg><div class="lr g" style="top:50px"><span class="num">1</span><i class="bg" style="left:22px;background:#17365d"></i><i class="mn" style="left:22.5px"></i><i class="cb" style="left:34px"><svg class="a" style="left:0;top:0;width:100%;height:100%" viewBox="0 0 12 12"><path d="M2.600 6.200l2.300 2.300 4.400-4.800" fill="none" stroke="#fff" stroke-width="1.300" stroke-linecap="round" stroke-linejoin="round"/></svg></i><span class="t k" style="left:56px;width:100px">OP_syn</span><span class="t" style="left:161px;width:292px">Отель Речной</span><span class="t c d" style="left:457px;width:119px">03.10.2025 09:00</span><span class="t c d" style="left:577px;width:127px">16.09.2026 12:58</span></div><div class="lr g" style="top:73px"><span class="num">2</span><i class="st" style="left:22px;background:#17365d"></i><i class="bg" style="left:32px;background:#1c487c"></i><i class="mn" style="left:32.5px"></i><i class="cb" style="left:44px"><svg class="a" style="left:0;top:0;width:100%;height:100%" viewBox="0 0 12 12"><path d="M2.600 6.200l2.300 2.300 4.400-4.800" fill="none" stroke="#fff" stroke-width="1.300" stroke-linecap="round" stroke-linejoin="round"/></svg></i><span class="t k" style="left:66px;width:90px">OP_syn.1</span><span class="t" style="left:161px;width:292px">Строительство отеля</span><span class="t c d" style="left:457px;width:119px">03.10.2025 09:00</span><span class="t c d" style="left:577px;width:127px">16.09.2026 12:58</span></div><div class="lr g" style="top:96px"><span class="num">3</span><i class="st" style="left:22px;background:#17365d"></i><i class="st" style="left:32px;background:#1c487c"></i><i class="bg" style="left:42px;background:#20589c"></i><i class="mn" style="left:42.5px"></i><i class="cb" style="left:54px"></i><span class="t k" style="left:76px;width:80px">OP_syn.1.1.1</span><span class="t" style="left:161px;width:292px">Земляные работы</span><span class="t c d" style="left:457px;width:119px">03.10.2025 09:00</span><span class="t c d" style="left:577px;width:127px">13.10.2025 18:00</span></div><div class="lr" style="top:119px"><span class="num">4</span><i class="st" style="left:22px;background:#17365d"></i><i class="st" style="left:32px;background:#1c487c"></i><i class="st" style="left:42px;background:#20589c"></i><i class="bg" style="left:52px;background:#fff"></i><i class="db" style="left:52px"></i><i class="dv" style="left:156px"></i><i class="dv" style="left:456px"></i><i class="dv" style="left:576px"></i><i class="cb" style="left:54px"></i><span class="t k" style="left:76px;width:80px">01.01</span><span class="t" style="left:161px;width:292px">Вертикальная планировка территории</span><span class="t c d" style="left:457px;width:119px">03.10.2025 09:00</span><span class="t c d" style="left:577px;width:127px">07.10.2025 18:00</span></div><div class="lr" style="top:142px"><span class="num">5</span><i class="st" style="left:22px;background:#17365d"></i><i class="st" style="left:32px;background:#1c487c"></i><i class="st" style="left:42px;background:#20589c"></i><i class="bg" style="left:52px;background:#fff"></i><i class="db" style="left:52px"></i><i class="dv" style="left:156px"></i><i class="dv" style="left:456px"></i><i class="dv" style="left:576px"></i><i class="cb" style="left:54px"></i><span class="t k" style="left:76px;width:80px">01.02</span><span class="t" style="left:161px;width:292px">Устройство котлована</span><span class="t c d" style="left:457px;width:119px">08.10.2025 09:00</span><span class="t c d" style="left:577px;width:127px">08.10.2025 11:31</span></div><div class="lr" style="top:165px"><span class="num">6</span><i class="st" style="left:22px;background:#17365d"></i><i class="st" style="left:32px;background:#1c487c"></i><i class="st" style="left:42px;background:#20589c"></i><i class="bg" style="left:52px;background:#fff"></i><i class="db" style="left:52px"></i><i class="dv" style="left:156px"></i><i class="dv" style="left:456px"></i><i class="dv" style="left:576px"></i><i class="cb" style="left:54px"></i><span class="t k" style="left:76px;width:80px">01.03</span><span class="t" style="left:161px;width:292px">Устройство песчаного основания</span><span class="t c d" style="left:457px;width:119px">10.10.2025 09:00</span><span class="t c d" style="left:577px;width:127px">13.10.2025 18:00</span></div><div class="lr g" style="top:188px"><span class="num">7</span><i class="st" style="left:22px;background:#17365d"></i><i class="st" style="left:32px;background:#1c487c"></i><i class="bg" style="left:42px;background:#20589c"></i><i class="mn" style="left:42.5px"></i><i class="cb" style="left:54px"><svg class="a" style="left:0;top:0;width:100%;height:100%" viewBox="0 0 12 12"><path d="M2.600 6.200l2.300 2.300 4.400-4.800" fill="none" stroke="#fff" stroke-width="1.300" stroke-linecap="round" stroke-linejoin="round"/></svg></i><span class="t k" style="left:76px;width:80px">OP_syn.1.1.2</span><span class="t" style="left:161px;width:292px">Общестроительные работы</span><span class="t c d" style="left:457px;width:119px">14.10.2025 09:00</span><span class="t c d" style="left:577px;width:127px">13.03.2026 13:00</span></div><div class="lr g" style="top:211px"><span class="num">8</span><i class="st" style="left:22px;background:#17365d"></i><i class="st" style="left:32px;background:#1c487c"></i><i class="st" style="left:42px;background:#20589c"></i><i class="bg" style="left:52px;background:#2869b8"></i><i class="mn" style="left:52.5px"></i><i class="cb" style="left:64px"><svg class="a" style="left:0;top:0;width:100%;height:100%" viewBox="0 0 12 12"><path d="M2.600 6.200l2.300 2.300 4.400-4.800" fill="none" stroke="#fff" stroke-width="1.300" stroke-linecap="round" stroke-linejoin="round"/></svg></i><span class="t k" style="left:86px;width:70px">OP_syn.1....</span><span class="t" style="left:161px;width:292px">Фундамент</span><span class="t c d" style="left:457px;width:119px">14.10.2025 09:00</span><span class="t c d" style="left:577px;width:127px">30.10.2025 18:00</span></div><div class="lr" style="top:234px"><span class="num">9</span><i class="st" style="left:22px;background:#17365d"></i><i class="st" style="left:32px;background:#1c487c"></i><i class="st" style="left:42px;background:#20589c"></i><i class="st" style="left:52px;background:#2869b8"></i><i class="bg" style="left:62px;background:#fff"></i><i class="db" style="left:62px"></i><i class="dv" style="left:156px"></i><i class="dv" style="left:456px"></i><i class="dv" style="left:576px"></i><i class="cb" style="left:64px"></i><span class="t k" style="left:86px;width:70px">02.01.01</span><span class="t" style="left:161px;width:292px">Устройство буронабивных свай захватка 1</span><span class="t c d" style="left:457px;width:119px">14.10.2025 09:00</span><span class="t c d" style="left:577px;width:127px">15.10.2025 18:00</span></div><div class="lr" style="top:257px"><span class="num">10</span><i class="st" style="left:22px;background:#17365d"></i><i class="st" style="left:32px;background:#1c487c"></i><i class="st" style="left:42px;background:#20589c"></i><i class="st" style="left:52px;background:#2869b8"></i><i class="bg" style="left:62px;background:#fff"></i><i class="db" style="left:62px"></i><i class="dv" style="left:156px"></i><i class="dv" style="left:456px"></i><i class="dv" style="left:576px"></i><i class="cb" style="left:64px"></i><span class="t k" style="left:86px;width:70px">02.01.02</span><span class="t" style="left:161px;width:292px">Устройство буронабивных свай захватка 2</span><span class="t c d" style="left:457px;width:119px">16.10.2025 09:00</span><span class="t c d" style="left:577px;width:127px">17.10.2025 18:00</span></div><div class="lr" style="top:280px"><span class="num">11</span><i class="st" style="left:22px;background:#17365d"></i><i class="st" style="left:32px;background:#1c487c"></i><i class="st" style="left:42px;background:#20589c"></i><i class="st" style="left:52px;background:#2869b8"></i><i class="bg" style="left:62px;background:#dde9f8"></i><i class="db" style="left:62px"></i><i class="dv" style="left:156px"></i><i class="dv" style="left:456px"></i><i class="dv" style="left:576px"></i><i class="cb" style="left:64px;background:#000;border-color:#000"><svg class="a" style="left:0;top:0;width:100%;height:100%" viewBox="0 0 12 12"><path d="M2.600 6.200l2.300 2.300 4.400-4.800" fill="none" stroke="#fff" stroke-width="1.300" stroke-linecap="round" stroke-linejoin="round"/></svg></i><span class="t k" style="left:86px;width:70px">02.01.03</span><span class="t" style="left:161px;width:292px">Устройство буронабивных свай захватка 3</span><span class="t c d" style="left:457px;width:119px">20.10.2025 09:00</span><span class="t c d" style="left:577px;width:127px">21.10.2025 18:00</span></div><div class="lr" style="top:303px"><span class="num">12</span><i class="st" style="left:22px;background:#17365d"></i><i class="st" style="left:32px;background:#1c487c"></i><i class="st" style="left:42px;background:#20589c"></i><i class="st" style="left:52px;background:#2869b8"></i><i class="bg" style="left:62px;background:#fff"></i><i class="db" style="left:62px"></i><i class="dv" style="left:156px"></i><i class="dv" style="left:456px"></i><i class="dv" style="left:576px"></i><i class="cb" style="left:64px"></i><span class="t k" style="left:86px;width:70px">02.01.04</span><span class="t" style="left:161px;width:292px">Устройство буронабивных свай захватка 4</span><span class="t c d" style="left:457px;width:119px">22.10.2025 09:00</span><span class="t c d" style="left:577px;width:127px">23.10.2025 18:00</span></div><div class="lr" style="top:326px"><span class="num">13</span><i class="st" style="left:22px;background:#17365d"></i><i class="st" style="left:32px;background:#1c487c"></i><i class="st" style="left:42px;background:#20589c"></i><i class="st" style="left:52px;background:#2869b8"></i><i class="bg" style="left:62px;background:#fff"></i><i class="db" style="left:62px"></i><i class="dv" style="left:156px"></i><i class="dv" style="left:456px"></i><i class="dv" style="left:576px"></i><i class="cb" style="left:64px"></i><span class="t k" style="left:86px;width:70px">02.01.05</span><span class="t" style="left:161px;width:292px">Устройство фундаментной плиты</span><span class="t c d" style="left:457px;width:119px">24.10.2025 09:00</span><span class="t c d" style="left:577px;width:127px">30.10.2025 18:00</span></div><div class="lr g" style="top:349px"><span class="num">14</span><i class="st" style="left:22px;background:#17365d"></i><i class="st" style="left:32px;background:#1c487c"></i><i class="st" style="left:42px;background:#20589c"></i><i class="bg" style="left:52px;background:#2869b8"></i><i class="mn" style="left:52.5px"></i><i class="cb" style="left:64px"></i><span class="t k" style="left:86px;width:70px">OP_syn.1....</span><span class="t" style="left:161px;width:292px">Монолитные работы подземной части</span><span class="t c d" style="left:457px;width:119px">31.10.2025 09:00</span><span class="t c d" style="left:577px;width:127px">17.11.2025 18:00</span></div><div class="lr" style="top:372px"><span class="num">15</span><i class="st" style="left:22px;background:#17365d"></i><i class="st" style="left:32px;background:#1c487c"></i><i class="st" style="left:42px;background:#20589c"></i><i class="st" style="left:52px;background:#2869b8"></i><i class="bg" style="left:62px;background:#fff"></i><i class="db" style="left:62px"></i><i class="dv" style="left:156px"></i><i class="dv" style="left:456px"></i><i class="dv" style="left:576px"></i><i class="cb" style="left:64px"></i><span class="t k" style="left:86px;width:70px">02.02.01</span><span class="t" style="left:161px;width:292px">Устройство монолитных стен цокольного этажа</span><span class="t c d" style="left:457px;width:119px">31.10.2025 09:00</span><span class="t c d" style="left:577px;width:127px">03.11.2025 18:00</span></div><div class="lr" style="top:395px"><span class="num">16</span><i class="st" style="left:22px;background:#17365d"></i><i class="st" style="left:32px;background:#1c487c"></i><i class="st" style="left:42px;background:#20589c"></i><i class="st" style="left:52px;background:#2869b8"></i><i class="bg" style="left:62px;background:#fff"></i><i class="db" style="left:62px"></i><i class="dv" style="left:156px"></i><i class="dv" style="left:456px"></i><i class="dv" style="left:576px"></i><i class="cb" style="left:64px"></i><span class="t k" style="left:86px;width:70px">02.02.02</span><span class="t" style="left:161px;width:292px">Устройство монолитного перекрытия...</span><span class="t c d" style="left:457px;width:119px">05.11.2025 09:00</span><span class="t c d" style="left:577px;width:127px">11.11.2025 18:00</span></div><div class="lr" style="top:418px"><span class="num">17</span><i class="st" style="left:22px;background:#17365d"></i><i class="st" style="left:32px;background:#1c487c"></i><i class="st" style="left:42px;background:#20589c"></i><i class="st" style="left:52px;background:#2869b8"></i><i class="bg" style="left:62px;background:#fff"></i><i class="db" style="left:62px"></i><i class="dv" style="left:156px"></i><i class="dv" style="left:456px"></i><i class="dv" style="left:576px"></i><i class="cb" style="left:64px"></i><span class="t k" style="left:86px;width:70px">02.02.03</span><span class="t" style="left:161px;width:292px">Устройство монолитной входной лестницы</span><span class="t c d" style="left:457px;width:119px">14.11.2025 09:00</span><span class="t c d" style="left:577px;width:127px">17.11.2025 18:00</span></div><div class="lr g" style="top:441px"><span class="num">18</span><i class="st" style="left:22px;background:#17365d"></i><i class="st" style="left:32px;background:#1c487c"></i><i class="st" style="left:42px;background:#20589c"></i><i class="bg" style="left:52px;background:#2869b8"></i><i class="mn" style="left:52.5px"></i><i class="cb" style="left:64px"></i><span class="t k" style="left:86px;width:70px">OP_syn.1....</span><span class="t" style="left:161px;width:292px">Монолитные работы надземной части</span><span class="t c d" style="left:457px;width:119px">12.11.2025 09:00</span><span class="t c d" style="left:577px;width:127px">24.12.2025 18:00</span></div><div class="lr" style="top:464px"><span class="num">19</span><i class="st" style="left:22px;background:#17365d"></i><i class="st" style="left:32px;background:#1c487c"></i><i class="st" style="left:42px;background:#20589c"></i><i class="st" style="left:52px;background:#2869b8"></i><i class="bg" style="left:62px;background:#fff"></i><i class="db" style="left:62px"></i><i class="dv" style="left:156px"></i><i class="dv" style="left:456px"></i><i class="dv" style="left:576px"></i><i class="cb" style="left:64px"></i><span class="t k" style="left:86px;width:70px">02.03.01</span><span class="t" style="left:161px;width:292px">Устройство наружных монолитных стен 1-го...</span><span class="t c d" style="left:457px;width:119px">12.11.2025 09:00</span><span class="t c d" style="left:577px;width:127px">13.11.2025 18:00</span></div><div class="lr" style="top:487px"><span class="num">20</span><i class="st" style="left:22px;background:#17365d"></i><i class="st" style="left:32px;background:#1c487c"></i><i class="st" style="left:42px;background:#20589c"></i><i class="st" style="left:52px;background:#2869b8"></i><i class="bg" style="left:62px;background:#fff"></i><i class="db" style="left:62px"></i><i class="dv" style="left:156px"></i><i class="dv" style="left:456px"></i><i class="dv" style="left:576px"></i><i class="cb" style="left:64px"></i><span class="t k" style="left:86px;width:70px">02.03.02</span><span class="t" style="left:161px;width:292px">Устройство внутренних монолитных стен 1-го...</span><span class="t c d" style="left:457px;width:119px">14.11.2025 09:00</span><span class="t c d" style="left:577px;width:127px">17.11.2025 18:00</span></div></div><div class="a" style="left:749px;top:89px;width:13px;height:499px;background:#f4f4f6"></div><div class="a" style="left:749.5px;top:89px;width:11px;height:53px;border-radius:5.5px;background:#dcdce0"></div><div class="a" style="left:45px;top:588px;width:717px;height:13px;background:#f4f4f6"></div><div class="a" style="left:46px;top:589px;width:624px;height:11px;border-radius:6px;background:#dcdce0"></div><div class="rg"><div class="hl" style="left:0;top:24px;width:1143px;background:#c4c4ca"></div><div class="hl" style="left:0;top:49px;width:1143px;background:#c4c4ca"></div><div class="a nw" style="left:1.0px;top:0;width:270px;height:24px;line-height:27px;text-align:center;font-size:12.3px">20.10.2025</div><div class="a nw" style="left:1.0px;top:25px;width:90px;height:24px;line-height:27px;text-align:center;font-size:12.3px">Согл.план</div><div class="a nw" style="left:91.1px;top:25px;width:90px;height:24px;line-height:27px;text-align:center;font-size:12.3px">Опер.план</div><i class="dv" style="left:91px;top:25px;height:25px;bottom:auto"></i><div class="a nw" style="left:181.2px;top:25px;width:90px;height:24px;line-height:27px;text-align:center;font-size:12.3px">Факт</div><i class="dv" style="left:181px;top:25px;height:25px;bottom:auto"></i><div class="a nw" style="left:271.3px;top:0;width:270px;height:24px;line-height:27px;text-align:center;font-size:12.3px">21.10.2025</div><div class="a nw" style="left:271.3px;top:25px;width:90px;height:24px;line-height:27px;text-align:center;font-size:12.3px">Согл.план</div><div class="a nw" style="left:361.4px;top:25px;width:90px;height:24px;line-height:27px;text-align:center;font-size:12.3px">Опер.план</div><i class="dv" style="left:361px;top:25px;height:25px;bottom:auto"></i><div class="a nw" style="left:451.5px;top:25px;width:90px;height:24px;line-height:27px;text-align:center;font-size:12.3px">Факт</div><i class="dv" style="left:451px;top:25px;height:25px;bottom:auto"></i><div class="a nw" style="left:541.5px;top:0;width:270px;height:24px;line-height:27px;text-align:center;font-size:12.3px">22.10.2025</div><div class="a nw" style="left:541.5px;top:25px;width:90px;height:24px;line-height:27px;text-align:center;font-size:12.3px">Согл.план</div><div class="a nw" style="left:631.6px;top:25px;width:90px;height:24px;line-height:27px;text-align:center;font-size:12.3px">Опер.план</div><i class="dv" style="left:632px;top:25px;height:25px;bottom:auto"></i><div class="a nw" style="left:721.7px;top:25px;width:90px;height:24px;line-height:27px;text-align:center;font-size:12.3px">Факт</div><i class="dv" style="left:722px;top:25px;height:25px;bottom:auto"></i><div class="a nw" style="left:811.8px;top:0;width:270px;height:24px;line-height:27px;text-align:center;font-size:12.3px">23.10.2025</div><div class="a nw" style="left:811.8px;top:25px;width:90px;height:24px;line-height:27px;text-align:center;font-size:12.3px">Согл.план</div><div class="a nw" style="left:901.9px;top:25px;width:90px;height:24px;line-height:27px;text-align:center;font-size:12.3px">Опер.план</div><i class="dv" style="left:902px;top:25px;height:25px;bottom:auto"></i><div class="a nw" style="left:992.0px;top:25px;width:90px;height:24px;line-height:27px;text-align:center;font-size:12.3px">Факт</div><i class="dv" style="left:992px;top:25px;height:25px;bottom:auto"></i><div class="rr g" style="top:50px"><i class="a" style="left:0;top:0;width:1143px;height:23px;background:#17365d"></i><span class="v" style="left:1.0px;width:90px">20</span><span class="v" style="left:91.1px;width:90px">20</span><span class="v gr" style="left:181.2px;width:90px">20</span><span class="v" style="left:271.3px;width:90px">20</span><span class="v" style="left:361.4px;width:90px">20</span><span class="v gr" style="left:451.5px;width:90px">20</span><span class="v" style="left:541.5px;width:90px">20</span><span class="v" style="left:631.6px;width:90px">20</span><span class="v gr" style="left:721.7px;width:90px">20</span><span class="v" style="left:811.8px;width:90px">20</span><span class="v" style="left:902.4px;width:80px">970</span><span class="v" style="left:982.5px;width:80px">970</span><span class="v" style="left:1062.6px;width:80px">970</span></div><div class="rr g" style="top:73px"><i class="a" style="left:0;top:0;width:1143px;height:23px;background:#1c487c"></i><span class="v" style="left:1.0px;width:90px">20</span><span class="v" style="left:91.1px;width:90px">20</span><span class="v gr" style="left:181.2px;width:90px">20</span><span class="v" style="left:271.3px;width:90px">20</span><span class="v" style="left:361.4px;width:90px">20</span><span class="v gr" style="left:451.5px;width:90px">20</span><span class="v" style="left:541.5px;width:90px">20</span><span class="v" style="left:631.6px;width:90px">20</span><span class="v gr" style="left:721.7px;width:90px">20</span><span class="v" style="left:811.8px;width:90px">20</span><span class="v" style="left:902.4px;width:80px">970</span><span class="v" style="left:982.5px;width:80px">970</span><span class="v" style="left:1062.6px;width:80px">970</span></div><div class="rr g" style="top:96px"><i class="a" style="left:0;top:0;width:1143px;height:23px;background:#20589c"></i><span class="v" style="left:902.4px;width:80px">250</span><span class="v" style="left:982.5px;width:80px">250</span><span class="v" style="left:1062.6px;width:80px">250</span></div><div class="rr" style="top:119px"><i class="a" style="left:0;top:0;width:1143px;height:23px;background:#fff"></i><i class="a" style="left:902px;top:0;width:241px;height:23px;background:#f4f4f5"></i><i class="db"></i><i class="dv" style="left:91px"></i><i class="dv" style="left:181px"></i><i class="dv" style="left:361px"></i><i class="dv" style="left:451px"></i><i class="dv" style="left:632px"></i><i class="dv" style="left:722px"></i><i class="dv" style="left:902px"></i><i class="dv" style="left:982px"></i><i class="dv" style="left:1061px"></i><i class="dv" style="left:1142px"></i><i class="vs" style="left:1px;top:0;height:23px;background:#c4c4ca"></i><i class="vs" style="left:271px;top:0;height:23px;background:#c4c4ca"></i><i class="vs" style="left:542px;top:0;height:23px;background:#c4c4ca"></i><i class="vs" style="left:812px;top:0;height:23px;background:#c4c4ca"></i><span class="v" style="left:902.4px;width:80px">250</span><span class="v" style="left:982.5px;width:80px">250</span><span class="v" style="left:1062.6px;width:80px">250</span></div><div class="rr" style="top:142px"><i class="a" style="left:0;top:0;width:1143px;height:23px;background:#fff"></i><i class="a" style="left:902px;top:0;width:241px;height:23px;background:#f4f4f5"></i><i class="db"></i><i class="dv" style="left:91px"></i><i class="dv" style="left:181px"></i><i class="dv" style="left:361px"></i><i class="dv" style="left:451px"></i><i class="dv" style="left:632px"></i><i class="dv" style="left:722px"></i><i class="dv" style="left:902px"></i><i class="dv" style="left:982px"></i><i class="dv" style="left:1061px"></i><i class="dv" style="left:1142px"></i><i class="vs" style="left:1px;top:0;height:23px;background:#c4c4ca"></i><i class="vs" style="left:271px;top:0;height:23px;background:#c4c4ca"></i><i class="vs" style="left:542px;top:0;height:23px;background:#c4c4ca"></i><i class="vs" style="left:812px;top:0;height:23px;background:#c4c4ca"></i></div><div class="rr" style="top:165px"><i class="a" style="left:0;top:0;width:1143px;height:23px;background:#fff"></i><i class="a" style="left:902px;top:0;width:241px;height:23px;background:#f4f4f5"></i><i class="db"></i><i class="dv" style="left:91px"></i><i class="dv" style="left:181px"></i><i class="dv" style="left:361px"></i><i class="dv" style="left:451px"></i><i class="dv" style="left:632px"></i><i class="dv" style="left:722px"></i><i class="dv" style="left:902px"></i><i class="dv" style="left:982px"></i><i class="dv" style="left:1061px"></i><i class="dv" style="left:1142px"></i><i class="vs" style="left:1px;top:0;height:23px;background:#c4c4ca"></i><i class="vs" style="left:271px;top:0;height:23px;background:#c4c4ca"></i><i class="vs" style="left:542px;top:0;height:23px;background:#c4c4ca"></i><i class="vs" style="left:812px;top:0;height:23px;background:#c4c4ca"></i></div><div class="rr g" style="top:188px"><i class="a" style="left:0;top:0;width:1143px;height:23px;background:#20589c"></i><span class="v" style="left:1.0px;width:90px">20</span><span class="v gr" style="left:721.7px;width:90px">20</span><span class="v" style="left:811.8px;width:90px">20</span><span class="v" style="left:902.4px;width:80px">720</span><span class="v" style="left:982.5px;width:80px">720</span><span class="v" style="left:1062.6px;width:80px">720</span></div><div class="rr g" style="top:211px"><i class="a" style="left:0;top:0;width:1143px;height:23px;background:#2869b8"></i><span class="v" style="left:1.0px;width:90px">20</span><span class="v gr" style="left:721.7px;width:90px">20</span><span class="v" style="left:811.8px;width:90px">20</span><span class="v" style="left:902.4px;width:80px">200</span><span class="v" style="left:982.5px;width:80px">200</span><span class="v" style="left:1062.6px;width:80px">200</span></div><div class="rr" style="top:234px"><i class="a" style="left:0;top:0;width:1143px;height:23px;background:#fff"></i><i class="a" style="left:902px;top:0;width:241px;height:23px;background:#f4f4f5"></i><i class="db"></i><i class="dv" style="left:91px"></i><i class="dv" style="left:181px"></i><i class="dv" style="left:361px"></i><i class="dv" style="left:451px"></i><i class="dv" style="left:632px"></i><i class="dv" style="left:722px"></i><i class="dv" style="left:902px"></i><i class="dv" style="left:982px"></i><i class="dv" style="left:1061px"></i><i class="dv" style="left:1142px"></i><i class="vs" style="left:1px;top:0;height:23px;background:#c4c4ca"></i><i class="vs" style="left:271px;top:0;height:23px;background:#c4c4ca"></i><i class="vs" style="left:542px;top:0;height:23px;background:#c4c4ca"></i><i class="vs" style="left:812px;top:0;height:23px;background:#c4c4ca"></i><span class="v" style="left:902.4px;width:80px">40</span><span class="v" style="left:982.5px;width:80px">40</span><span class="v" style="left:1062.6px;width:80px">40</span></div><div class="rr" style="top:257px"><i class="a" style="left:0;top:0;width:1143px;height:23px;background:#fff"></i><i class="a" style="left:902px;top:0;width:241px;height:23px;background:#f4f4f5"></i><i class="db"></i><i class="dv" style="left:91px"></i><i class="dv" style="left:181px"></i><i class="dv" style="left:361px"></i><i class="dv" style="left:451px"></i><i class="dv" style="left:632px"></i><i class="dv" style="left:722px"></i><i class="dv" style="left:902px"></i><i class="dv" style="left:982px"></i><i class="dv" style="left:1061px"></i><i class="dv" style="left:1142px"></i><i class="vs" style="left:1px;top:0;height:23px;background:#c4c4ca"></i><i class="vs" style="left:271px;top:0;height:23px;background:#c4c4ca"></i><i class="vs" style="left:542px;top:0;height:23px;background:#c4c4ca"></i><i class="vs" style="left:812px;top:0;height:23px;background:#c4c4ca"></i><span class="v" style="left:902.4px;width:80px">40</span><span class="v" style="left:982.5px;width:80px">40</span><span class="v" style="left:1062.6px;width:80px">40</span></div><div class="rr" style="top:280px"><i class="a" style="left:0;top:0;width:1143px;height:23px;background:#dde9f8"></i><i class="a" style="left:902px;top:0;width:241px;height:23px;background:#dde9f8"></i><i class="db"></i><i class="dv" style="left:91px"></i><i class="dv" style="left:181px"></i><i class="dv" style="left:361px"></i><i class="dv" style="left:451px"></i><i class="dv" style="left:632px"></i><i class="dv" style="left:722px"></i><i class="dv" style="left:902px"></i><i class="dv" style="left:982px"></i><i class="dv" style="left:1061px"></i><i class="dv" style="left:1142px"></i><i class="vs" style="left:1px;top:0;height:23px;background:#c4c4ca"></i><i class="vs" style="left:271px;top:0;height:23px;background:#c4c4ca"></i><i class="vs" style="left:542px;top:0;height:23px;background:#c4c4ca"></i><i class="vs" style="left:812px;top:0;height:23px;background:#c4c4ca"></i><span class="v" style="left:1.0px;width:90px">20</span><span class="v" style="left:902.4px;width:80px">40</span><span class="v" style="left:982.5px;width:80px">40</span><span class="v" style="left:1062.6px;width:80px">40</span></div><div class="rr" style="top:303px"><i class="a" style="left:0;top:0;width:1143px;height:23px;background:#fff"></i><i class="a" style="left:902px;top:0;width:241px;height:23px;background:#f4f4f5"></i><i class="db"></i><i class="dv" style="left:91px"></i><i class="dv" style="left:181px"></i><i class="dv" style="left:361px"></i><i class="dv" style="left:451px"></i><i class="dv" style="left:632px"></i><i class="dv" style="left:722px"></i><i class="dv" style="left:902px"></i><i class="dv" style="left:982px"></i><i class="dv" style="left:1061px"></i><i class="dv" style="left:1142px"></i><i class="vs" style="left:1px;top:0;height:23px;background:#c4c4ca"></i><i class="vs" style="left:271px;top:0;height:23px;background:#c4c4ca"></i><i class="vs" style="left:542px;top:0;height:23px;background:#c4c4ca"></i><i class="vs" style="left:812px;top:0;height:23px;background:#c4c4ca"></i><span class="v gr" style="left:721.7px;width:90px">20</span><span class="v" style="left:811.8px;width:90px">20</span><span class="v" style="left:902.4px;width:80px">40</span><span class="v" style="left:982.5px;width:80px">40</span><span class="v" style="left:1062.6px;width:80px">40</span></div><div class="rr" style="top:326px"><i class="a" style="left:0;top:0;width:1143px;height:23px;background:#fff"></i><i class="a" style="left:902px;top:0;width:241px;height:23px;background:#f4f4f5"></i><i class="db"></i><i class="dv" style="left:91px"></i><i class="dv" style="left:181px"></i><i class="dv" style="left:361px"></i><i class="dv" style="left:451px"></i><i class="dv" style="left:632px"></i><i class="dv" style="left:722px"></i><i class="dv" style="left:902px"></i><i class="dv" style="left:982px"></i><i class="dv" style="left:1061px"></i><i class="dv" style="left:1142px"></i><i class="vs" style="left:1px;top:0;height:23px;background:#c4c4ca"></i><i class="vs" style="left:271px;top:0;height:23px;background:#c4c4ca"></i><i class="vs" style="left:542px;top:0;height:23px;background:#c4c4ca"></i><i class="vs" style="left:812px;top:0;height:23px;background:#c4c4ca"></i><span class="v" style="left:902.4px;width:80px">40</span><span class="v" style="left:982.5px;width:80px">40</span><span class="v" style="left:1062.6px;width:80px">40</span></div><div class="rr g" style="top:349px"><i class="a" style="left:0;top:0;width:1143px;height:23px;background:#2869b8"></i><span class="v" style="left:902.4px;width:80px">120</span><span class="v" style="left:982.5px;width:80px">120</span><span class="v" style="left:1062.6px;width:80px">120</span></div><div class="rr" style="top:372px"><i class="a" style="left:0;top:0;width:1143px;height:23px;background:#fff"></i><i class="a" style="left:902px;top:0;width:241px;height:23px;background:#f4f4f5"></i><i class="db"></i><i class="dv" style="left:91px"></i><i class="dv" style="left:181px"></i><i class="dv" style="left:361px"></i><i class="dv" style="left:451px"></i><i class="dv" style="left:632px"></i><i class="dv" style="left:722px"></i><i class="dv" style="left:902px"></i><i class="dv" style="left:982px"></i><i class="dv" style="left:1061px"></i><i class="dv" style="left:1142px"></i><i class="vs" style="left:1px;top:0;height:23px;background:#c4c4ca"></i><i class="vs" style="left:271px;top:0;height:23px;background:#c4c4ca"></i><i class="vs" style="left:542px;top:0;height:23px;background:#c4c4ca"></i><i class="vs" style="left:812px;top:0;height:23px;background:#c4c4ca"></i><span class="v" style="left:902.4px;width:80px">40</span><span class="v" style="left:982.5px;width:80px">40</span><span class="v" style="left:1062.6px;width:80px">40</span></div><div class="rr" style="top:395px"><i class="a" style="left:0;top:0;width:1143px;height:23px;background:#fff"></i><i class="a" style="left:902px;top:0;width:241px;height:23px;background:#f4f4f5"></i><i class="db"></i><i class="dv" style="left:91px"></i><i class="dv" style="left:181px"></i><i class="dv" style="left:361px"></i><i class="dv" style="left:451px"></i><i class="dv" style="left:632px"></i><i class="dv" style="left:722px"></i><i class="dv" style="left:902px"></i><i class="dv" style="left:982px"></i><i class="dv" style="left:1061px"></i><i class="dv" style="left:1142px"></i><i class="vs" style="left:1px;top:0;height:23px;background:#c4c4ca"></i><i class="vs" style="left:271px;top:0;height:23px;background:#c4c4ca"></i><i class="vs" style="left:542px;top:0;height:23px;background:#c4c4ca"></i><i class="vs" style="left:812px;top:0;height:23px;background:#c4c4ca"></i><span class="v" style="left:902.4px;width:80px">40</span><span class="v" style="left:982.5px;width:80px">40</span><span class="v" style="left:1062.6px;width:80px">40</span></div><div class="rr" style="top:418px"><i class="a" style="left:0;top:0;width:1143px;height:23px;background:#fff"></i><i class="a" style="left:902px;top:0;width:241px;height:23px;background:#f4f4f5"></i><i class="db"></i><i class="dv" style="left:91px"></i><i class="dv" style="left:181px"></i><i class="dv" style="left:361px"></i><i class="dv" style="left:451px"></i><i class="dv" style="left:632px"></i><i class="dv" style="left:722px"></i><i class="dv" style="left:902px"></i><i class="dv" style="left:982px"></i><i class="dv" style="left:1061px"></i><i class="dv" style="left:1142px"></i><i class="vs" style="left:1px;top:0;height:23px;background:#c4c4ca"></i><i class="vs" style="left:271px;top:0;height:23px;background:#c4c4ca"></i><i class="vs" style="left:542px;top:0;height:23px;background:#c4c4ca"></i><i class="vs" style="left:812px;top:0;height:23px;background:#c4c4ca"></i><span class="v" style="left:902.4px;width:80px">40</span><span class="v" style="left:982.5px;width:80px">40</span><span class="v" style="left:1062.6px;width:80px">40</span></div><div class="rr g" style="top:441px"><i class="a" style="left:0;top:0;width:1143px;height:23px;background:#2869b8"></i><span class="v" style="left:902.4px;width:80px">400</span><span class="v" style="left:982.5px;width:80px">400</span><span class="v" style="left:1062.6px;width:80px">400</span></div><div class="rr" style="top:464px"><i class="a" style="left:0;top:0;width:1143px;height:23px;background:#fff"></i><i class="a" style="left:902px;top:0;width:241px;height:23px;background:#f4f4f5"></i><i class="db"></i><i class="dv" style="left:91px"></i><i class="dv" style="left:181px"></i><i class="dv" style="left:361px"></i><i class="dv" style="left:451px"></i><i class="dv" style="left:632px"></i><i class="dv" style="left:722px"></i><i class="dv" style="left:902px"></i><i class="dv" style="left:982px"></i><i class="dv" style="left:1061px"></i><i class="dv" style="left:1142px"></i><i class="vs" style="left:1px;top:0;height:23px;background:#c4c4ca"></i><i class="vs" style="left:271px;top:0;height:23px;background:#c4c4ca"></i><i class="vs" style="left:542px;top:0;height:23px;background:#c4c4ca"></i><i class="vs" style="left:812px;top:0;height:23px;background:#c4c4ca"></i><span class="v" style="left:902.4px;width:80px">40</span><span class="v" style="left:982.5px;width:80px">40</span><span class="v" style="left:1062.6px;width:80px">40</span></div><div class="rr" style="top:487px"><i class="a" style="left:0;top:0;width:1143px;height:23px;background:#fff"></i><i class="a" style="left:902px;top:0;width:241px;height:23px;background:#f4f4f5"></i><i class="db"></i><i class="dv" style="left:91px"></i><i class="dv" style="left:181px"></i><i class="dv" style="left:361px"></i><i class="dv" style="left:451px"></i><i class="dv" style="left:632px"></i><i class="dv" style="left:722px"></i><i class="dv" style="left:902px"></i><i class="dv" style="left:982px"></i><i class="dv" style="left:1061px"></i><i class="dv" style="left:1142px"></i><i class="vs" style="left:1px;top:0;height:23px;background:#c4c4ca"></i><i class="vs" style="left:271px;top:0;height:23px;background:#c4c4ca"></i><i class="vs" style="left:542px;top:0;height:23px;background:#c4c4ca"></i><i class="vs" style="left:812px;top:0;height:23px;background:#c4c4ca"></i><span class="v" style="left:902.4px;width:80px">40</span><span class="v" style="left:982.5px;width:80px">40</span><span class="v" style="left:1062.6px;width:80px">40</span></div><div class="vs" style="left:1px;top:0;height:50px;background:#c4c4ca"></div><div class="vs" style="left:271px;top:0;height:50px;background:#c4c4ca"></div><div class="vs" style="left:542px;top:0;height:50px;background:#c4c4ca"></div><div class="vs" style="left:812px;top:0;height:50px;background:#c4c4ca"></div><div class="vs" style="left:902px;top:0;height:499px;background:#c4c4ca;opacity:.8"></div><div class="a" style="left:903px;top:0;width:240px;height:24px;background:#fff"></div><div class="a" style="left:903px;top:25px;width:240px;height:24px;background:#fff"></div><div class="a nw" style="left:903px;top:0;width:240px;height:24px;line-height:27px;text-align:center;font-size:12.3px">Суммарно</div><div class="a nw" style="left:902.4px;top:25px;width:80px;height:24px;line-height:27px;text-align:center;font-size:12.3px">Согл.план</div><div class="a nw" style="left:982.5px;top:25px;width:80px;height:24px;line-height:27px;text-align:center;font-size:12.3px">Опер.план</div><i class="dv" style="left:982px;top:25px;height:25px;bottom:auto"></i><div class="a nw" style="left:1062.6px;top:25px;width:80px;height:24px;line-height:27px;text-align:center;font-size:12.3px">Факт</div><i class="dv" style="left:1061px;top:25px;height:25px;bottom:auto"></i><div class="vs" style="left:1140px;top:25px;height:24px;background:#c4c4ca"></div><svg class="a" style="left:1111.800px;top:3px;width:14px;height:20px" viewBox="0 0 14 20"><path d="M3 1.500l8 8.500-8 8.500" fill="none" stroke="#4a4a50" stroke-width="2" stroke-linecap="round" stroke-linejoin="round"/></svg></div><div class="a" style="left:1910px;top:89px;width:8px;height:499px;background:#f4f4f6"></div><div class="a" style="left:1910.3px;top:89.5px;width:10px;height:53px;border-radius:5px;background:#dcdce0"></div><div class="a" style="left:767px;top:588px;width:1151px;height:13px;background:#f4f4f6"></div><div class="a" style="left:45px;top:601px;width:1873px;height:6px;background:#b2b2ba"></div><div class="a" style="left:45px;top:607px;width:1873px;height:52px;background:#fff"></div><div class="hl" style="left:45px;top:659px;width:1873px"></div><div class="a nw" style="left:90px;top:618.3px;font-size:17.4px;color:#2e2e33;line-height:22px">Карточка работы</div><div class="a nw" style="left:317px;top:618.3px;font-size:17.4px;color:#2e2e33;line-height:22px">Связи работы</div><div class="a nw" style="left:519px;top:618.3px;font-size:17.4px;color:#2e2e33;line-height:22px">Связанные графики</div><div class="a nw" style="left:770px;top:618.3px;font-size:17.4px;color:#2e2e33;line-height:22px">Справочники</div><div class="a nw" style="left:1496px;top:618.3px;font-size:17.4px;color:#2e2e33;line-height:22px">Документация</div><div class="a nw" style="left:1702px;top:618.3px;font-size:17.4px;color:#2e2e33;line-height:22px">Запросы и поручения</div><div class="hl" style="left:45px;top:702.5px;width:1873px"></div><div class="a" style="left:493px;top:660px;width:43.500px;height:43px;background:#dededf;border-radius:5px 5px 0 0"></div><svg class="ic " style="left:55.0px;top:670.0px;width:24px;height:24px;" viewBox="0 0 24 24"><path d="M12 1v22M1 12h22" stroke-width="2"/></svg><svg class="ic dis" style="left:103.0px;top:670.0px;width:24px;height:24px;" viewBox="0 0 24 24"><path d="M1.500 7.500h20M17 3l4.500 4.500L17 12M22.500 16.500h-20M7 12l-4.500 4.500L7 21"/></svg><svg class="ic dis" style="left:151.0px;top:670.0px;width:24px;height:24px;" viewBox="0 0 24 24"><path d="M1.800 4.100h21" stroke-width="1.900"/><path d="M7.300 3.700c.4-2.100 1.400-3.100 3.200-3.100h3.600c1.800 0 2.800 1 3.200 3.100z" fill="currentColor" stroke-width=".5"/><path d="M5.600 7.700V20.400a2.500 2.500 0 0 0 2.500 2.500h8.900a2.500 2.500 0 0 0 2.500-2.500V7.700" stroke-width="2"/></svg><svg class="ic " style="left:204.0px;top:670.0px;width:24px;height:24px;" viewBox="0 0 24 24"><path d="M1.2 12C4 7.3 7.7 5 12 5s8 2.3 10.8 7C20 16.7 16.3 19 12 19S4 16.7 1.2 12z"/><circle cx="12" cy="12" r="2.4"/></svg><svg class="ic " style="left:252.0px;top:670.0px;width:24px;height:24px;" viewBox="0 0 24 24"><path d="M2.300 2.700h16.800a1 1 0 0 1 .8 1.600l-6.300 8v8.200l-5.300-2.200v-6l-6.800-8a1 1 0 0 1 .8-1.600z" stroke-width="2"/><path d="M19.200 21h5.400l-2.700 2.700z" fill="currentColor" stroke-width=".6"/></svg><svg class="ic " style="left:305.0px;top:670.0px;width:24px;height:24px;" viewBox="0 0 24 24"><path d="M19.75 1.51A6.7 6.7 0 0 0 10.43 10.27L1.44 19.11A2.2 2.2 0 0 0 4.56 22.23L13.54 13.38A6.7 6.7 0 0 0 22.30 4.06L18.65 7.70A1.8 1.8 0 0 1 16.11 5.16Z" stroke-width="1.9"/><path d="M18.100 21.200h5.800l-2.900 2.600z" fill="currentColor" stroke="none"/></svg><svg class="ic " style="left:353.0px;top:669.5px;width:25px;height:25px;" viewBox="0 0 24 24"><rect x="2.500" y="4.600" width="19" height="18.200" rx="3"/><path d="M2.500 8.800h19" stroke-width="1.500"/><path d="M7.100 1.200v3.400M17.100 1.200v3.400"/><path d="M8 8.800v14M12.100 8.800v14M16.200 8.800v14" stroke-width="1.700"/></svg><svg class="ic dis" style="left:406.0px;top:669.5px;width:25px;height:25px;" viewBox="0 0 24 24"><rect x="2.500" y="4.600" width="19" height="18.200" rx="3"/><path d="M2.500 8.800h19" stroke-width="1.500"/><path d="M7.100 1.200v3.400M17.100 1.200v3.400"/><path d="M6.300 8.800v14" stroke-width="1.600"/><path d="M17.500 12.300v8.400l-6.400-4.200z" fill="currentColor" stroke-width=".8"/></svg><svg class="ic dis" style="left:454.0px;top:669.5px;width:25px;height:25px;" viewBox="0 0 24 24"><rect x="2.500" y="4.600" width="19" height="18.200" rx="3"/><path d="M2.500 8.800h19" stroke-width="1.500"/><path d="M7.100 1.200v3.400M17.100 1.200v3.400"/><path d="M6.300 8.800v14" stroke-width="1.600"/><path d="M11.700 12.300v8.400l6.400-4.200z" fill="currentColor" stroke-width=".8"/></svg><svg class="ic " style="left:502.0px;top:669.5px;width:25px;height:25px;" viewBox="0 0 24 24"><rect x="2.500" y="4.600" width="19" height="18.200" rx="3"/><path d="M2.500 8.800h19" stroke-width="1.500"/><path d="M7.100 1.200v3.400M17.100 1.200v3.400"/><text x="12" y="20.100" text-anchor="middle" font-family="Liberation Sans" font-weight="bold" font-size="10.200" fill="currentColor" stroke="none">S</text></svg><svg class="ic " style="left:550.0px;top:669.5px;width:25px;height:25px;" viewBox="0 0 24 24"><rect x="2.500" y="4.600" width="19" height="18.200" rx="3"/><path d="M2.500 8.800h19" stroke-width="1.500"/><path d="M7.100 1.200v3.400M17.100 1.200v3.400"/><text x="12" y="20.100" text-anchor="middle" font-family="Liberation Sans" font-weight="bold" font-size="10.200" fill="currentColor" stroke="none">D</text></svg><svg class="ic " style="left:598.0px;top:669.5px;width:25px;height:25px;" viewBox="0 0 24 24"><rect x="2.500" y="4.600" width="19" height="18.200" rx="3"/><path d="M2.500 8.800h19" stroke-width="1.500"/><path d="M7.100 1.200v3.400M17.100 1.200v3.400"/><text x="12" y="20.100" text-anchor="middle" font-family="Liberation Sans" font-weight="bold" font-size="10.200" fill="currentColor" stroke="none">F</text></svg><svg class="ic " style="left:651.1px;top:669.3px;width:25.4px;height:25.4px;" viewBox="0 0 24 24"><circle cx="12" cy="12" r="10.600"/><path d="M6.800 12.200l2.400 2.300 4.300-4.300M11.500 14l.9.800 5.200-5" stroke-width="1.800"/></svg><svg class="ic dis" style="left:699.1px;top:669.3px;width:25.4px;height:25.4px;" viewBox="0 0 24 24"><circle cx="12" cy="12" r="10.600"/><path d="M8.300 12.200l2.600 2.600 4.900-5"/></svg><svg class="ic dis" style="left:747.1px;top:669.3px;width:25.4px;height:25.4px;" viewBox="0 0 24 24"><circle cx="12" cy="12" r="10.600"/><path d="M8.500 8.500l7 7M15.500 8.500l-7 7"/></svg><svg class="ic dis" style="left:1887.1px;top:669.3px;width:25.4px;height:25.4px;" viewBox="0 0 24 24"><rect x="1.500" y="1.500" width="21" height="21" rx="2.500"/><path d="M16 1.500v21"/></svg><div class="vs" style="left:189px;top:660px;height:43px"></div><div class="vs" style="left:290px;top:660px;height:43px"></div><div class="vs" style="left:391px;top:660px;height:43px"></div><div class="vs" style="left:637px;top:660px;height:43px"></div><div class="a nw" style="left:53px;top:706px;font-size:14.92px;line-height:20px;color:#1d1d1f">02.01.03 Устройство буронабивных свай захватка 3. Сроки <span style="letter-spacing:-.32px">20.10.2025 - 21.10.2025.</span> Прогресс: <span style="letter-spacing:-.3px">100%.</span></div><div class="a" style="left:45px;top:728px;width:896.5px;height:180px;overflow:hidden;font-size:14px"><div class="a" style="left:0;top:0;width:884px;height:180px;background:#fff"></div><div class="a" style="left:0;top:0;width:896.5px;height:23.5px;background:#f0f0f2;border-top:1.5px solid #c0c0c8;border-bottom:1.5px solid #c0c0c8"></div><div class="a nw" style="left:0px;top:1.5px;width:301px;height:22px;line-height:22px;text-align:center;font-weight:bold;font-size:12.6px;letter-spacing:-0.1px">Наименование</div><div class="a nw" style="left:301px;top:1.5px;width:150px;height:22px;line-height:22px;text-align:center;font-weight:bold;font-size:12.6px;letter-spacing:-0.1px">Ед. измерения</div><div class="a nw" style="left:451px;top:1.5px;width:150px;height:22px;line-height:22px;text-align:center;font-weight:bold;font-size:12.6px;letter-spacing:-0.1px">Плановое количество</div><div class="a nw" style="left:601px;top:1.5px;width:150px;height:22px;line-height:22px;text-align:center;font-weight:bold;font-size:12.6px;letter-spacing:-0.1px">Фактическое количе...</div><div class="a nw" style="left:751px;top:1.5px;width:150px;height:22px;line-height:22px;text-align:center;font-weight:bold;font-size:12.6px;letter-spacing:-0.1px">Остаток</div><div class="a" style="left:0;top:23.5px;width:884px;height:30px;background:#fff;border-bottom:1.5px solid #c0c0c8"></div><svg class="a" style="left:5px;top:28.400000000000045px;width:20px;height:20px" viewBox="0 0 20 20"><circle cx="10" cy="10" r="9.200" fill="none" stroke="#3e3e45" stroke-width="1.100"/><g fill="none" stroke="#3e3e45" stroke-width=".9"><rect x="7.800" y="4.300" width="4.400" height="2.600" rx=".6"/><rect x="6.300" y="6.900" width="7.400" height="2.600" rx=".6"/><path d="M10 6.900v2.600"/><rect x="4.800" y="9.500" width="5.200" height="2.700" rx=".6"/><rect x="10" y="9.500" width="5.200" height="2.700" rx=".6"/><rect x="4.800" y="12.200" width="5.200" height="2.700" rx=".6"/><rect x="10" y="12.200" width="5.200" height="2.700" rx=".6"/></g></svg><div class="a nw" style="left:33.2px;top:28.900000000000045px;line-height:20px;font-size:13.9px">Стоимость по ресурсам</div><div class="a nw" style="left:301.6px;top:29.399999999999977px;width:150px;line-height:20px;text-align:center;font-size:14px"></div><div class="a nw" style="left:451.6px;top:29.399999999999977px;width:150px;line-height:20px;text-align:center;font-size:14px">103 040</div><div class="a nw" style="left:601.6px;top:29.399999999999977px;width:150px;line-height:20px;text-align:center;font-size:14px">103 040</div><div class="a nw" style="left:751.6px;top:29.399999999999977px;width:150px;line-height:20px;text-align:center;font-size:14px">0</div><div class="a" style="left:0;top:53.5px;width:884px;height:30px;background:#fff;border-bottom:1.5px solid #c0c0c8"></div><svg class="a" style="left:5px;top:58.40000000000005px;width:20px;height:20px" viewBox="0 0 20 20"><circle cx="10" cy="10" r="9.200" fill="none" stroke="#3e3e45" stroke-width="1.100"/><circle cx="10" cy="7.300" r="2.700" fill="#3e3e45"/><path d="M4.600 14.800c0-2.800 2.300-4 5.400-4s5.400 1.200 5.400 4z" fill="#3e3e45"/></svg><div class="a nw" style="left:33.2px;top:58.90000000000005px;line-height:20px;font-size:13.9px">Трудозатраты по ресурсам</div><div class="a nw" style="left:301.6px;top:59.39999999999998px;width:150px;line-height:20px;text-align:center;font-size:14px"></div><div class="a nw" style="left:451.6px;top:59.39999999999998px;width:150px;line-height:20px;text-align:center;font-size:14px">48</div><div class="a nw" style="left:601.6px;top:59.39999999999998px;width:150px;line-height:20px;text-align:center;font-size:14px">48</div><div class="a nw" style="left:751.6px;top:59.39999999999998px;width:150px;line-height:20px;text-align:center;font-size:14px">24</div><div class="a" style="left:0;top:83.5px;width:884px;height:30px;background:#fff;border-bottom:1.5px solid #c0c0c8"></div><svg class="a" style="left:5px;top:88.40000000000005px;width:20px;height:20px" viewBox="0 0 20 20"><circle cx="10" cy="10" r="8.700" fill="none" stroke="#3e3e45" stroke-width="1.700"/><circle cx="10" cy="10.200" r="2.200" fill="#3e3e45"/><path d="M1.600 9.300c2.600-1.100 4.800-.9 6.600.2M18.400 9.300c-2.600-1.100-4.800-.9-6.600.2" stroke="#3e3e45" stroke-width="1.900" fill="none"/><path d="M8.700 11.600L6.800 18.100M11.300 11.600l1.900 6.500" stroke="#3e3e45" stroke-width="1.700" fill="none"/></svg><div class="a nw" style="left:33.2px;top:88.90000000000005px;line-height:20px;font-size:13.9px">Физобъем</div><div class="a nw" style="left:301.6px;top:89.39999999999998px;width:150px;line-height:20px;text-align:center;font-size:14px">нет</div><div class="a nw" style="left:451.6px;top:89.39999999999998px;width:150px;line-height:20px;text-align:center;font-size:14px">4</div><div class="a nw" style="left:601.6px;top:89.39999999999998px;width:150px;line-height:20px;text-align:center;font-size:14px">4</div><div class="a nw" style="left:751.6px;top:89.39999999999998px;width:150px;line-height:20px;text-align:center;font-size:14px">4</div><div class="a" style="left:0;top:116px;width:884px;height:29.7px;background:#fff;border-bottom:1.5px solid #c0c0c8"></div><svg class="a" style="left:45px;top:117.4px;width:26px;height:18px" viewBox="0 0 26 18"><path d="M5.100 0v14.200h19" fill="none" stroke="#111" stroke-width="2"/></svg><svg class="a" style="left:73.5px;top:121.89999999999998px;width:20px;height:16.7px" viewBox="0 0 24 20"><g fill="#4a4a52"><path d="M0 1h14v2H0z"/><path d="M1 3h1.600v6H1zM4.200 3h1.600v6H4.200zM7.400 3h1.600v6H7.400zM10.600 3h1.600v6h-1.600z"/><path d="M0 9h14v2.500H0z"/><path d="M14.500 0h2v11h-2z"/><path d="M16 3.500h4.500l3 4V15H16zM18 5.500v3h4l-2.200-3z" fill-rule="evenodd"/><path d="M1 11.500h15V15H1z"/><circle cx="5.500" cy="15.500" r="3"/><circle cx="18.500" cy="15.500" r="3"/></g><circle cx="5.500" cy="15.500" r="1.200" fill="#fff"/><circle cx="18.500" cy="15.500" r="1.200" fill="#fff"/></svg><div class="a nw" style="left:101.5px;top:120.59999999999998px;line-height:20px;font-size:13.9px">Ивановец</div><div class="a nw" style="left:301.6px;top:121.20000000000005px;width:150px;line-height:20px;text-align:center;font-size:14px">м-ч</div><div class="a nw" style="left:451.6px;top:121.20000000000005px;width:150px;line-height:20px;text-align:center;font-size:14px">180</div><div class="a nw" style="left:601.6px;top:121.20000000000005px;width:150px;line-height:20px;text-align:center;font-size:14px">180</div><div class="a nw" style="left:751.6px;top:121.20000000000005px;width:150px;line-height:20px;text-align:center;font-size:14px">0</div><div class="a" style="left:0;top:145.7px;width:884px;height:27px;background:#fafafa;border-bottom:1.5px solid #c0c0c8"></div><svg class="a" style="left:45px;top:147.1px;width:26px;height:18px" viewBox="0 0 26 18"><path d="M5.100 0v14.200h19" fill="none" stroke="#111" stroke-width="2"/></svg><svg class="a" style="left:73.5px;top:152.29999999999995px;width:20px;height:16.7px" viewBox="0 0 24 20"><g fill="#4a4a52"><path d="M0 1h14v2H0z"/><path d="M1 3h1.600v6H1zM4.200 3h1.600v6H4.200zM7.400 3h1.600v6H7.400zM10.600 3h1.600v6h-1.600z"/><path d="M0 9h14v2.500H0z"/><path d="M14.500 0h2v11h-2z"/><path d="M16 3.500h4.500l3 4V15H16zM18 5.500v3h4l-2.200-3z" fill-rule="evenodd"/><path d="M1 11.500h15V15H1z"/><circle cx="5.500" cy="15.500" r="3"/><circle cx="18.500" cy="15.500" r="3"/></g><circle cx="5.500" cy="15.500" r="1.200" fill="#fff"/><circle cx="18.500" cy="15.500" r="1.200" fill="#fff"/></svg><div class="a nw" style="left:101.5px;top:150.99999999999994px;line-height:20px;font-size:13.9px">Liebherr</div><div class="a nw" style="left:301.6px;top:151.5px;width:150px;line-height:20px;text-align:center;font-size:14px">м-ч</div><div class="a nw" style="left:451.6px;top:151.5px;width:150px;line-height:20px;text-align:center;font-size:14px">900</div><div class="a nw" style="left:601.6px;top:151.5px;width:150px;line-height:20px;text-align:center;font-size:14px">900</div><div class="a nw" style="left:751.6px;top:151.5px;width:150px;line-height:20px;text-align:center;font-size:14px">0</div><div class="a" style="left:0;top:115.200px;width:884px;height:1.500px;background:#c0c0c8"></div><div class="vs" style="left:300px;top:0;height:172.700px;background:#c6c6cd;width:1.300px"></div><div class="vs" style="left:450px;top:0;height:172.700px;background:#c6c6cd;width:1.300px"></div><div class="vs" style="left:600px;top:0;height:172.700px;background:#c6c6cd;width:1.300px"></div><div class="vs" style="left:750px;top:0;height:172.700px;background:#c6c6cd;width:1.300px"></div><div class="vs" style="left:0;top:0;height:180px;background:#c0c0c8"></div></div><div class="a" style="left:929px;top:751.5px;width:13px;height:157px;background:#f4f4f6"></div><div class="a" style="left:930px;top:858px;width:11px;height:22px;border-radius:5px;background:#dcdce0"></div><div class="a" style="left:45px;top:900px;width:884px;height:8px;background:#f4f4f6"></div><div class="a" style="left:346px;top:901px;width:134px;height:10px;border-radius:5px;background:#dcdce0"></div><div class="a" style="left:942px;top:704px;width:5px;height:204px;background:#b2b2ba"></div><svg class="a" style="left:940px;top:797px;width:8px;height:18px" viewBox="0 0 8 18"><circle cx="4" cy="3" r="1.700" fill="#333"/><circle cx="4" cy="9" r="1.700" fill="#333"/><circle cx="4" cy="15" r="1.700" fill="#333"/></svg><div class="a" style="left:947px;top:703px;width:951px;height:205px;overflow:hidden;background:#f0f0f2;font-size:12.3px;letter-spacing:-0.4px"><div class="hl" style="left:0;top:0;width:951px;background:#c4c4ca"></div><div class="hl" style="left:0;top:24px;width:951px;background:#c4c4ca"></div><div class="hl" style="left:0;top:49px;width:951px;background:#c4c4ca"></div><div class="a" style="left:0;top:141px;width:700.5px;height:64px;background:#c5dcf2"></div><div class="a" style="left:701px;top:141px;width:251px;height:64px;background:#fff"></div><div class="a nw" style="left:-1.0px;top:1px;width:350px;height:24px;line-height:24px;text-align:center">20.10.2025</div><div class="a nw" style="left:-1.0px;top:25px;width:70px;height:24px;line-height:27px;text-align:center;overflow:hidden">Согл.план</div><div class="a nw" style="left:69.1px;top:25px;width:70px;height:24px;line-height:27px;text-align:center;overflow:hidden">Опер.план</div><div class="a nw" style="left:139.2px;top:25px;width:70px;height:24px;line-height:27px;text-align:center;overflow:hidden">Факт</div><div class="a nw" style="left:209.2px;top:25px;width:70px;height:24px;line-height:27px;text-align:center;overflow:hidden">Уд. трудоз...</div><div class="a nw" style="left:279.3px;top:25px;width:70px;height:24px;line-height:27px;text-align:center;overflow:hidden">Ставка</div><div class="a nw" style="left:349.4px;top:1px;width:350px;height:24px;line-height:24px;text-align:center">21.10.2025</div><div class="a nw" style="left:349.4px;top:25px;width:70px;height:24px;line-height:27px;text-align:center;overflow:hidden">Согл.план</div><div class="a nw" style="left:419.5px;top:25px;width:70px;height:24px;line-height:27px;text-align:center;overflow:hidden">Опер.план</div><div class="a nw" style="left:489.6px;top:25px;width:70px;height:24px;line-height:27px;text-align:center;overflow:hidden">Факт</div><div class="a nw" style="left:559.6px;top:25px;width:70px;height:24px;line-height:27px;text-align:center;overflow:hidden">Уд. трудоз...</div><div class="a nw" style="left:629.7px;top:25px;width:70px;height:24px;line-height:27px;text-align:center;overflow:hidden">Ставка</div><div class="a nw" style="left:699.8px;top:1px;width:350px;height:24px;line-height:24px;text-align:center">22.10.2025</div><div class="a nw" style="left:699.8px;top:25px;width:70px;height:24px;line-height:27px;text-align:center;overflow:hidden">Согл.план</div><div class="a nw" style="left:769.9px;top:25px;width:70px;height:24px;line-height:27px;text-align:center;overflow:hidden">Опер.план</div><div class="a nw" style="left:840.0px;top:25px;width:70px;height:24px;line-height:27px;text-align:center;overflow:hidden">Факт</div><div class="a nw" style="left:910.0px;top:25px;width:70px;height:24px;line-height:27px;text-align:center;overflow:hidden">Уд. трудоз...</div><div class="a nw" style="left:980.1px;top:25px;width:70px;height:24px;line-height:27px;text-align:center;overflow:hidden">Ставка</div><i class="db" style="top:79px;bottom:auto"></i><i class="db" style="top:109px;bottom:auto"></i><i class="db" style="top:139px;bottom:auto"></i><i class="db" style="top:171px;bottom:auto"></i><i class="db" style="top:202px;bottom:auto"></i><i class="db" style="top:141px;bottom:auto"></i><i class="dv" style="left:69px;top:25px"></i><i class="dv" style="left:139px;top:25px"></i><i class="dv" style="left:210px;top:25px"></i><i class="dv" style="left:280px;top:25px"></i><div class="vs" style="left:350px;top:0;height:205px;background:#b9b9c1"></div><i class="dv" style="left:420px;top:25px"></i><i class="dv" style="left:490px;top:25px"></i><i class="dv" style="left:560px;top:25px"></i><i class="dv" style="left:630px;top:25px"></i><div class="vs" style="left:700px;top:0;height:205px;background:#b9b9c1"></div><i class="dv" style="left:770px;top:25px"></i><i class="dv" style="left:840px;top:25px"></i><i class="dv" style="left:910px;top:25px"></i><div class="a nw" style="left:1.0px;top:50px;width:70px;height:30px;line-height:30px;text-align:center;color:#1d1d1f">51 520</div><div class="a nw" style="left:71.1px;top:50px;width:70px;height:30px;line-height:30px;text-align:center;color:#1d1d1f">51 520</div><div class="a nw" style="left:141.2px;top:50px;width:70px;height:30px;line-height:30px;text-align:center;color:#1d1d1f">51 520</div><div class="a nw" style="left:351.4px;top:50px;width:70px;height:30px;line-height:30px;text-align:center;color:#1d1d1f">51 520</div><div class="a nw" style="left:421.5px;top:50px;width:70px;height:30px;line-height:30px;text-align:center;color:#1d1d1f">51 520</div><div class="a nw" style="left:491.6px;top:50px;width:70px;height:30px;line-height:30px;text-align:center;color:#1d1d1f">51 520</div><div class="a nw" style="left:1.0px;top:80px;width:70px;height:30px;line-height:30px;text-align:center;color:#1d1d1f">12</div><div class="a nw" style="left:71.1px;top:80px;width:70px;height:30px;line-height:30px;text-align:center;color:#1d1d1f">12</div><div class="a nw" style="left:141.2px;top:80px;width:70px;height:30px;line-height:30px;text-align:center;color:#1d1d1f">12</div><div class="a nw" style="left:351.4px;top:80px;width:70px;height:30px;line-height:30px;text-align:center;color:#1d1d1f">12</div><div class="a nw" style="left:421.5px;top:80px;width:70px;height:30px;line-height:30px;text-align:center;color:#1d1d1f">12</div><div class="a nw" style="left:491.6px;top:80px;width:70px;height:30px;line-height:30px;text-align:center;color:#1d1d1f">12</div><div class="a nw" style="left:1.0px;top:141px;width:70px;height:31px;line-height:33px;text-align:center;color:#7d8791">90</div><div class="a nw" style="left:71.1px;top:141px;width:70px;height:31px;line-height:33px;text-align:center;color:#7d8791">90</div><svg class="a" style="left:140px;top:142px;width:19px;height:19px" viewBox="0 0 20 20"><path d="M0 0h20L0 20z" fill="#9ddbb0"/></svg><div class="a nw" style="left:141.2px;top:141px;width:70px;height:31px;line-height:33px;text-align:center;color:#6cc98a">90</div><div class="a nw" style="left:211.2px;top:141px;width:70px;height:31px;line-height:33px;text-align:center;color:#7d8791">6</div><div class="a nw" style="left:281.3px;top:141px;width:70px;height:31px;line-height:33px;text-align:center;color:#7d8791">8 000</div><div class="a nw" style="left:351.4px;top:141px;width:70px;height:31px;line-height:33px;text-align:center;color:#7d8791">90</div><div class="a nw" style="left:421.5px;top:141px;width:70px;height:31px;line-height:33px;text-align:center;color:#7d8791">90</div><svg class="a" style="left:491px;top:142px;width:19px;height:19px" viewBox="0 0 20 20"><path d="M0 0h20L0 20z" fill="#9ddbb0"/></svg><div class="a nw" style="left:491.6px;top:141px;width:70px;height:31px;line-height:33px;text-align:center;color:#6cc98a">90</div><div class="a nw" style="left:561.6px;top:141px;width:70px;height:31px;line-height:33px;text-align:center;color:#7d8791">6</div><div class="a nw" style="left:631.7px;top:141px;width:70px;height:31px;line-height:33px;text-align:center;color:#7d8791">8 000</div><div class="a nw" style="left:1.0px;top:172px;width:70px;height:31px;line-height:31.5px;text-align:center;color:#7d8791">450</div><div class="a nw" style="left:71.1px;top:172px;width:70px;height:31px;line-height:31.5px;text-align:center;color:#7d8791">450</div><svg class="a" style="left:140px;top:173px;width:19px;height:19px" viewBox="0 0 20 20"><path d="M0 0h20L0 20z" fill="#9ddbb0"/></svg><div class="a nw" style="left:141.2px;top:172px;width:70px;height:31px;line-height:31.5px;text-align:center;color:#6cc98a">450</div><div class="a nw" style="left:211.2px;top:172px;width:70px;height:31px;line-height:31.5px;text-align:center;color:#7d8791">6</div><div class="a nw" style="left:281.3px;top:172px;width:70px;height:31px;line-height:31.5px;text-align:center;color:#7d8791">16 800</div><div class="a nw" style="left:351.4px;top:172px;width:70px;height:31px;line-height:31.5px;text-align:center;color:#7d8791">450</div><div class="a nw" style="left:421.5px;top:172px;width:70px;height:31px;line-height:31.5px;text-align:center;color:#7d8791">450</div><svg class="a" style="left:491px;top:173px;width:19px;height:19px" viewBox="0 0 20 20"><path d="M0 0h20L0 20z" fill="#9ddbb0"/></svg><div class="a nw" style="left:491.6px;top:172px;width:70px;height:31px;line-height:31.5px;text-align:center;color:#6cc98a">450</div><div class="a nw" style="left:561.6px;top:172px;width:70px;height:31px;line-height:31.5px;text-align:center;color:#7d8791">6</div><div class="a nw" style="left:631.7px;top:172px;width:70px;height:31px;line-height:31.5px;text-align:center;color:#7d8791">16 800</div><div class="a nw" style="left:910px;top:141px;width:70px;height:31px;line-height:33px;text-align:center;color:#8b8b93">6</div><div class="a nw" style="left:910px;top:172px;width:70px;height:31px;line-height:33px;text-align:center;color:#8b8b93">6</div><svg class="a" style="left:490px;top:203px;width:20px;height:20px" viewBox="0 0 20 20"><path d="M0 0h20L0 20z" fill="#9ddbb0"/></svg><svg class="a" style="left:140px;top:203px;width:20px;height:20px" viewBox="0 0 20 20"><path d="M0 0h20L0 20z" fill="#9ddbb0"/></svg></div><div class="a" style="left:1898px;top:704px;width:20px;height:204px;background:#f4f4f6"></div><div class="a" style="left:1899px;top:775px;width:10px;height:140px;border-radius:5px;background:#dcdce0"></div><div class="a" style="left:1910px;top:703px;width:10px;height:146px;border-radius:5px;background:#dcdce0"></div><div class="a" style="left:1525px;top:88px;width:264.7px;height:144px;background:#f4f4f6;border-radius:4px;box-shadow:0 2px 6px rgba(0,0,0,.3),0 0 1px rgba(0,0,0,.3)"><div class="a nw" style="left:55px;top:13.8px;line-height:22px;font-size:15px;color:#2e2e33">Распределить по периодам</div><div class="a nw" style="left:55px;top:61.8px;line-height:22px;font-size:15px;color:#2e2e33">Копировать распределение</div><div class="a nw" style="left:55px;top:109.8px;line-height:22px;font-size:15px;color:#2e2e33">Удалить распределение</div><svg class="a" style="left:0;top:0;width:60px;height:144px;fill:none;stroke:#4a4a52;stroke-width:1.900;stroke-linecap:round;stroke-linejoin:round" viewBox="0 0 60 144"><text x="26.500" y="22.800" text-anchor="middle" font-family="Liberation Sans" font-weight="bold" font-size="14.500" fill="#4a4a52" stroke="none" letter-spacing="-.2">123</text><path d="M15.8 31.7H37.8M19.8 27.7L15.8 31.7l4 4M33.8 27.7L37.8 31.7l-4 4"/><path d="M19.600 62.200v6.200M19.600 71.200v.3" stroke-width="2"/><path d="M27.8 64.7H37.8M33.8 60.7L37.8 64.7l-4 4"/><path d="M15.8 79.8H25.8M19.8 75.8L15.8 79.8l4 4"/><path d="M30.800 76.200c.5-2.300 5.300-2.300 5.300.5 0 1.900-2.500 2-2.500 4.200M33.600 83.600v.3" stroke-width="1.900"/><path d="M21.700 109.400l8.600 8.600M30.300 109.400l-8.600 8.600"/><path d="M15.8 127.4H37.8M19.8 123.4L15.8 127.4l4 4M33.8 123.4L37.8 127.4l-4 4"/></svg></div><div class="modal"><div class="in"><div class="a" style="left:0;top:0;width:701px;height:44px;background:#f0f0f2"></div><div class="a nw" style="left:17px;top:11px;font-size:17.600px;line-height:24px;color:#1d1d1f">Копирование суточного плана</div><svg class="a" style="left:670px;top:13px;width:18px;height:18px" viewBox="0 0 18 18"><path d="M1.500 1.500l15 15M16.500 1.500l-15 15" stroke="#3e3e45" stroke-width="1.500" stroke-linecap="round"/></svg><div class="a nw" style="left:17px;top:58.5px;line-height:22px;font-size:15px;color:#1d1d1f;">Выберите режим копирования:</div><svg class="a" style="left:15.9px;top:100.0px;width:22px;height:22px" viewBox="0 0 22 22"><circle cx="11" cy="11" r="8.900" fill="#fff" stroke="#55555d" stroke-width="1.600"/><circle cx="11" cy="11" r="5" fill="#55555d"/></svg><div class="a nw" style="left:44.5px;top:101px;line-height:22px;font-size:14.85px;color:#1d1d1f;">Скопировать Опер.план в Согл.план</div><svg class="a" style="left:15.9px;top:136.5px;width:22px;height:22px" viewBox="0 0 22 22"><circle cx="11" cy="11" r="8.900" fill="#fff" stroke="#55555d" stroke-width="1.600"/></svg><div class="a nw" style="left:44.5px;top:137.5px;line-height:22px;font-size:14.85px;color:#1d1d1f;">Скопировать Согл.план в Опер.план</div><div class="a nw" style="left:17px;top:163.5px;line-height:22px;font-size:15px;color:#1d1d1f;">Выберите элементы для копирования:</div><svg class="a" style="left:0;top:0;width:360px;height:320px" viewBox="0 0 360 320"><rect x="17.700" y="215" width="321" height="34.800" rx="4" fill="#fff" stroke="#c0c0c8" stroke-width="1.700"/><rect x="17.700" y="275" width="321" height="34.800" rx="4" fill="#fff" stroke="#c0c0c8" stroke-width="1.700"/></svg><div class="a nw" style="left:29px;top:221.5px;line-height:22px;font-size:15.5px;color:#1d1d1f;">Все справочники</div><i class="tri" style="left:309.500px;top:230px;border-top-color:#3e3e45"></i><div class="a nw" style="left:29px;top:281.5px;line-height:22px;font-size:15.3px;color:#77777f;">Все ресурсы</div><i class="tri" style="left:309.500px;top:290px;border-top-color:#85858d"></i><div class="a nw" style="left:17px;top:333px;line-height:22px;font-size:14.7px;color:#1d1d1f;">Выбранно работ: 1</div><div class="a nw" style="left:17px;top:447px;width:89px;height:36px;border:2px solid #6ea9ea;border-radius:4px;color:#2b7de0;font-size:15px;line-height:32px;text-align:center">Закрыть</div><div class="a nw" style="left:576.500px;top:447px;width:109px;height:36px;border-radius:4px;background:#1976d2;color:#fff;font-size:15px;line-height:36px;text-align:center;font-weight:bold;letter-spacing:-0.500px;box-shadow:0 2px 4px rgba(0,0,0,.3)">Применить</div><svg class="a" style="left:370.0px;top:59.5px;width:22px;height:22px" viewBox="0 0 22 22"><circle cx="11" cy="11" r="8.900" fill="#fff" stroke="#55555d" stroke-width="1.600"/></svg><div class="a nw" style="left:398.5px;top:60.5px;line-height:22px;font-size:15px;color:#1d1d1f;">За весь период</div><svg class="a" style="left:370.0px;top:87.2px;width:22px;height:22px" viewBox="0 0 22 22"><circle cx="11" cy="11" r="8.900" fill="#fff" stroke="#55555d" stroke-width="1.600"/><circle cx="11" cy="11" r="5" fill="#55555d"/></svg><div class="a nw" style="left:398.5px;top:88px;line-height:22px;font-size:15px;color:#1d1d1f;">За выбранный период</div><div class="a" style="left:355px;top:124px;width:330px;height:290px;background:#f4f4f6;border-radius:6px"></div><svg class="a" style="left:378px;top:149.5px;width:10px;height:14px" viewBox="0 0 10 14"><path d="M7.500 1.500L2 7l5.500 5.500" fill="none" stroke="#111" stroke-width="2" stroke-linecap="round" stroke-linejoin="round"/></svg><svg class="a" style="left:547px;top:149.5px;width:10px;height:14px" viewBox="0 0 10 14"><path d="M2.500 1.500L8 7l-5.500 5.500" fill="none" stroke="#111" stroke-width="2" stroke-linecap="round" stroke-linejoin="round"/></svg><svg class="a" style="left:571px;top:149.5px;width:10px;height:14px" viewBox="0 0 10 14"><path d="M7.500 1.500L2 7l5.500 5.500" fill="none" stroke="#111" stroke-width="2" stroke-linecap="round" stroke-linejoin="round"/></svg><svg class="a" style="left:652.5px;top:149.5px;width:10px;height:14px" viewBox="0 0 10 14"><path d="M2.500 1.500L8 7l-5.500 5.500" fill="none" stroke="#111" stroke-width="2" stroke-linecap="round" stroke-linejoin="round"/></svg><div class="a nw" style="left:427px;top:145.5px;width:80px;text-align:center;line-height:22px;font-size:15px">Март</div><div class="a nw" style="left:576.500px;top:145.5px;width:80px;text-align:center;line-height:22px;font-size:15px">2026</div><div class="a nw" style="left:372.4px;top:178.5px;width:40px;text-align:center;line-height:20px;font-size:13px;color:#b5b5bb">Пн</div><div class="a nw" style="left:415.0px;top:178.5px;width:40px;text-align:center;line-height:20px;font-size:13px;color:#b5b5bb">Вт</div><div class="a nw" style="left:457.59999999999997px;top:178.5px;width:40px;text-align:center;line-height:20px;font-size:13px;color:#b5b5bb">Ср</div><div class="a nw" style="left:500.20000000000005px;top:178.5px;width:40px;text-align:center;line-height:20px;font-size:13px;color:#b5b5bb">Чт</div><div class="a nw" style="left:542.8px;top:178.5px;width:40px;text-align:center;line-height:20px;font-size:13px;color:#b5b5bb">Пт</div><div class="a nw" style="left:585.4px;top:178.5px;width:40px;text-align:center;line-height:20px;font-size:13px;color:#b5b5bb">Сб</div><div class="a nw" style="left:628.0px;top:178.5px;width:40px;text-align:center;line-height:20px;font-size:13px;color:#b5b5bb">Вс</div><div class="a" style="left:392px;top:238.500px;width:277.500px;height:30px;background:#b3cdec"></div><div class="a" style="left:371px;top:270.500px;width:298.500px;height:30px;background:#b3cdec"></div><div class="a" style="left:371px;top:302.500px;width:149px;height:30px;background:#b3cdec"></div><div class="a" style="left:377.4px;top:238.500px;width:30px;height:30px;border-radius:50%;background:#1976d2"></div><div class="a" style="left:505.20000000000005px;top:302.500px;width:30px;height:30px;border-radius:50%;background:#1976d2"></div><div class="a nw" style="left:628.0px;top:210.0px;width:40px;text-align:center;line-height:21px;font-size:15px;color:#1d1d1f">1</div><div class="a nw" style="left:372.4px;top:242.0px;width:40px;text-align:center;line-height:21px;font-size:15px;color:#fff">2</div><div class="a nw" style="left:415.0px;top:242.0px;width:40px;text-align:center;line-height:21px;font-size:15px;color:#fff">3</div><div class="a nw" style="left:457.59999999999997px;top:242.0px;width:40px;text-align:center;line-height:21px;font-size:15px;color:#fff">4</div><div class="a nw" style="left:500.20000000000005px;top:242.0px;width:40px;text-align:center;line-height:21px;font-size:15px;color:#fff">5</div><div class="a nw" style="left:542.8px;top:242.0px;width:40px;text-align:center;line-height:21px;font-size:15px;color:#fff">6</div><div class="a nw" style="left:585.4px;top:242.0px;width:40px;text-align:center;line-height:21px;font-size:15px;color:#fff">7</div><div class="a nw" style="left:628.0px;top:242.0px;width:40px;text-align:center;line-height:21px;font-size:15px;color:#fff">8</div><div class="a nw" style="left:372.4px;top:274.0px;width:40px;text-align:center;line-height:21px;font-size:15px;color:#fff">9</div><div class="a nw" style="left:415.0px;top:274.0px;width:40px;text-align:center;line-height:21px;font-size:15px;color:#fff">10</div><div class="a nw" style="left:457.59999999999997px;top:274.0px;width:40px;text-align:center;line-height:21px;font-size:15px;color:#fff">11</div><div class="a nw" style="left:500.20000000000005px;top:274.0px;width:40px;text-align:center;line-height:21px;font-size:15px;color:#fff">12</div><div class="a nw" style="left:542.8px;top:274.0px;width:40px;text-align:center;line-height:21px;font-size:15px;color:#fff">13</div><div class="a nw" style="left:585.4px;top:274.0px;width:40px;text-align:center;line-height:21px;font-size:15px;color:#fff">14</div><div class="a nw" style="left:628.0px;top:274.0px;width:40px;text-align:center;line-height:21px;font-size:15px;color:#fff">15</div><div class="a nw" style="left:372.4px;top:306.0px;width:40px;text-align:center;line-height:21px;font-size:15px;color:#fff">16</div><div class="a nw" style="left:415.0px;top:306.0px;width:40px;text-align:center;line-height:21px;font-size:15px;color:#fff">17</div><div class="a nw" style="left:457.59999999999997px;top:306.0px;width:40px;text-align:center;line-height:21px;font-size:15px;color:#fff">18</div><div class="a nw" style="left:500.20000000000005px;top:306.0px;width:40px;text-align:center;line-height:21px;font-size:15px;color:#fff">19</div><div class="a nw" style="left:542.8px;top:306.0px;width:40px;text-align:center;line-height:21px;font-size:15px;color:#1d1d1f">20</div><div class="a nw" style="left:585.4px;top:306.0px;width:40px;text-align:center;line-height:21px;font-size:15px;color:#1d1d1f">21</div><div class="a nw" style="left:628.0px;top:306.0px;width:40px;text-align:center;line-height:21px;font-size:15px;color:#1d1d1f">22</div><div class="a nw" style="left:372.4px;top:339.0px;width:40px;text-align:center;line-height:21px;font-size:15px;color:#1d1d1f">23</div><div class="a nw" style="left:415.0px;top:339.0px;width:40px;text-align:center;line-height:21px;font-size:15px;color:#1d1d1f">24</div><div class="a nw" style="left:457.59999999999997px;top:339.0px;width:40px;text-align:center;line-height:21px;font-size:15px;color:#1d1d1f">25</div><div class="a nw" style="left:500.20000000000005px;top:339.0px;width:40px;text-align:center;line-height:21px;font-size:15px;color:#1d1d1f">26</div><div class="a nw" style="left:542.8px;top:339.0px;width:40px;text-align:center;line-height:21px;font-size:15px;color:#1d1d1f">27</div><div class="a nw" style="left:585.4px;top:339.0px;width:40px;text-align:center;line-height:21px;font-size:15px;color:#1d1d1f">28</div><div class="a nw" style="left:628.0px;top:339.0px;width:40px;text-align:center;line-height:21px;font-size:15px;color:#1d1d1f">29</div><div class="a nw" style="left:372.4px;top:371.0px;width:40px;text-align:center;line-height:21px;font-size:15px;color:#1d1d1f">30</div><div class="a nw" style="left:415.0px;top:371.0px;width:40px;text-align:center;line-height:21px;font-size:15px;color:#1d1d1f">31</div></div></div><svg class="a ann" style="left:0;top:0;width:1918px;height:908px" viewBox="0 0 1918 908"><line x1="192.4" y1="381.3" x2="134" y2="381.3"/><polygon points="125,381.3 137.2,375.40000000000003 137.2,387.2"/><ellipse cx="207.4" cy="381.3" rx="15.800" ry="17.300"/><text transform="translate(207.4,388.1) scale(.94,1)">1</text><line x1="1469" y1="67" x2="1528.8" y2="67"/><polygon points="1537.8,67 1525.6,61.1 1525.6,72.9"/><ellipse cx="1454" cy="67" rx="15.800" ry="17.300"/><text transform="translate(1454,73.8) scale(.94,1)">2</text><line x1="1469" y1="161.2" x2="1528.8" y2="161.2"/><polygon points="1537.8,161.2 1525.6,155.29999999999998 1525.6,167.1"/><ellipse cx="1454" cy="161.2" rx="15.800" ry="17.300"/><text transform="translate(1454,168.0) scale(.94,1)">3</text><line x1="770" y1="293.3" x2="829.5" y2="293.3"/><polygon points="838.5,293.3 826.3,287.40000000000003 826.3,299.2"/><ellipse cx="755" cy="293.3" rx="15.800" ry="17.300"/><text transform="translate(755,300.1) scale(.94,1)">4</text><line x1="767" y1="416.7" x2="828" y2="416.7"/><polygon points="837,416.7 824.8,410.8 824.8,422.59999999999997"/><ellipse cx="752" cy="416.7" rx="15.800" ry="17.300"/><text transform="translate(752,423.5) scale(.94,1)">5</text><line x1="767" y1="476.5" x2="828" y2="476.5"/><polygon points="837,476.5 824.8,470.6 824.8,482.4"/><ellipse cx="752" cy="476.5" rx="15.800" ry="17.300"/><text transform="translate(752,483.3) scale(.94,1)">6</text><line x1="1556.4" y1="454" x2="1497" y2="454"/><polygon points="1488,454 1500.2,448.1 1500.2,459.9"/><ellipse cx="1571.4" cy="454" rx="15.800" ry="17.300"/><text transform="translate(1571.4,460.8) scale(.94,1)">7</text><line x1="1327.5" y1="649.9" x2="1387.3" y2="649.9"/><polygon points="1396.3,649.9 1384.1,644.0 1384.1,655.8"/><ellipse cx="1312.5" cy="649.9" rx="15.800" ry="17.300"/><text transform="translate(1312.5,656.6999999999999) scale(.94,1)">8</text></svg></body></html>
